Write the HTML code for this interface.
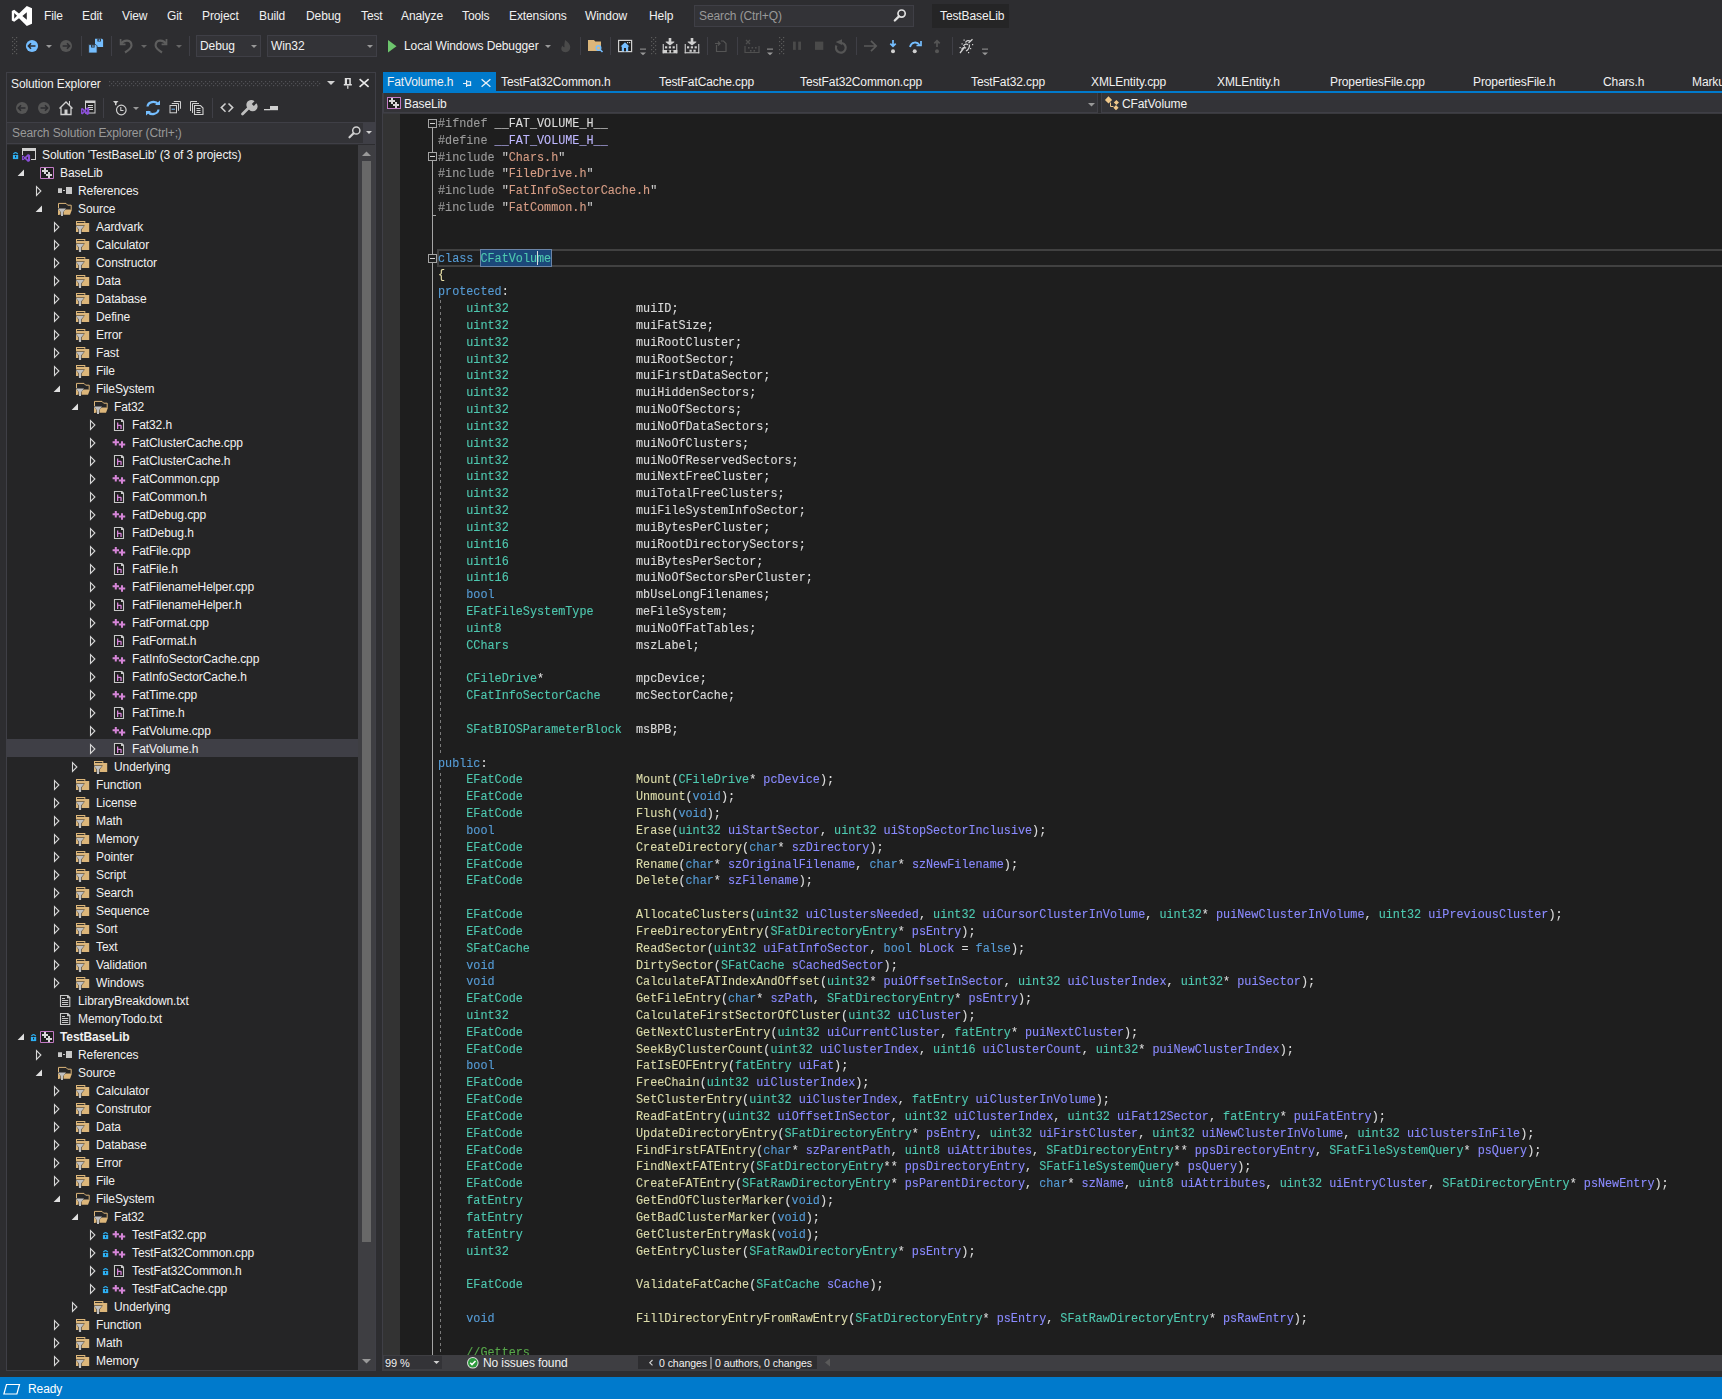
<!DOCTYPE html><html><head><meta charset="utf-8"><style>
*{margin:0;padding:0;box-sizing:border-box}
html,body{width:1722px;height:1399px;overflow:hidden;background:#2D2D30}
body{position:relative;font-family:"Liberation Sans",sans-serif;font-size:12px;color:#F1F1F1}
.a{position:absolute}
.t{position:absolute;white-space:pre;line-height:14px;margin-top:-7px;letter-spacing:-0.1px}
.code{position:absolute;left:0;top:0;font-family:"Liberation Mono",monospace;font-size:12.5px;white-space:pre;color:#DCDCDC;-webkit-text-stroke:0.12px currentColor}
.ln{position:absolute;left:0;height:17px;line-height:17px;transform-origin:0 0}
.k{color:#569CD6}.ty{color:#4EC9B0}.s{color:#D69D85}.p{color:#9B9B9B}.m{color:#BEB7FF}.f{color:#DCDCAA}.pr{color:#8A8AFF}.c{color:#57A64A}.br{color:#E8DFA8}.q{color:#C8C8C8}.w{color:#DCDCDC}
</style></head><body><div class="a" style="left:0;top:0;width:1722px;height:1399px;background:#2D2D30"></div><div class="t " style="left:44px;top:16px;">File</div><div class="t " style="left:82px;top:16px;">Edit</div><div class="t " style="left:122px;top:16px;">View</div><div class="t " style="left:167px;top:16px;">Git</div><div class="t " style="left:202px;top:16px;">Project</div><div class="t " style="left:259px;top:16px;">Build</div><div class="t " style="left:306px;top:16px;">Debug</div><div class="t " style="left:361px;top:16px;">Test</div><div class="t " style="left:401px;top:16px;">Analyze</div><div class="t " style="left:462px;top:16px;">Tools</div><div class="t " style="left:509px;top:16px;">Extensions</div><div class="t " style="left:585px;top:16px;">Window</div><div class="t " style="left:649px;top:16px;">Help</div><div class="a" style="left:694px;top:5px;width:220px;height:22px;background:#333337;border:1px solid #3F3F46"></div><div class="t " style="left:699px;top:16px;color:#999999">Search (Ctrl+Q)</div><div class="a" style="left:932px;top:4px;width:77px;height:24px;background:#252526"></div><div class="t " style="left:940px;top:16px;">TestBaseLib</div><div class="a" style="left:196px;top:35px;width:65px;height:22px;background:#333337;border:1px solid #3F3F46"></div><div class="t " style="left:200px;top:46px;">Debug</div><div class="a" style="left:267px;top:35px;width:110px;height:22px;background:#333337;border:1px solid #3F3F46"></div><div class="t " style="left:271px;top:46px;">Win32</div><div class="t " style="left:404px;top:46px;">Local Windows Debugger</div><div class="a" style="left:6px;top:72px;width:370px;height:1299px;border:1px solid #3F3F46;background:#2D2D30"></div><div class="t " style="left:11px;top:84px;">Solution Explorer</div><div class="a" style="left:7px;top:122px;width:368px;height:22px;background:#333337;border-top:1px solid #3F3F46;border-bottom:1px solid #3F3F46"></div><div class="a" style="left:363px;top:122px;width:12px;height:22px;background:#3F3F46"></div><div class="t " style="left:12px;top:133px;color:#999999">Search Solution Explorer (Ctrl+;)</div><div class="a" style="left:7px;top:145px;width:351px;height:1225px;background:#252526"></div><div class="a" style="left:358px;top:145px;width:17px;height:1225px;background:#3E3E42"></div><div class="a" style="left:362px;top:161px;width:9px;height:1081px;background:#686868"></div><div class="a" style="left:7px;top:739px;width:351px;height:18px;background:#3F3F46"></div><div class="t " style="left:42px;top:155px;">Solution &#x27;TestBaseLib&#x27; (3 of 3 projects)</div><svg class="a" style="left:21px;top:147px" width="16" height="16" viewBox="0 0 16 16" overflow="visible"><path d="M1 1h14v3H1z" fill="#D0D0D0"/><path d="M1 1h1v7H1zM14 1h1v12h-1zM10 12h5v1h-5z" fill="#D0D0D0"/><g transform="translate(1,7) scale(0.4) translate(-11.8,-5.9)"><path fill-rule="evenodd" d="M11.8 11L14.2 9.8L19 13.4L26.8 5.9L32 8.2V23.7L26.8 26L19 18.2L14.2 21.8L11.8 20.6zM26.8 12.2L22.4 15.9L26.8 19.7zM14.2 12.9V18.7L17 15.8z" fill="#8A4FD8"/></g></svg><svg class="a" style="left:12px;top:151px" width="7" height="9" viewBox="0 0 7 9" overflow="visible"><path d="M1.4 3.2Q3.55 0.2 5.7 3.2" fill="none" stroke="#2DB1F5" stroke-width="1.3"/><path d="M0.9 4h5.3v4.1H0.9z" fill="#2DB1F5"/><path d="M3 4.7h1.1v1.8H3z" fill="#1E1E1E"/></svg><div class="t " style="left:60px;top:173px;">BaseLib</div><svg class="a" style="left:17px;top:169px" width="8" height="8" viewBox="0 0 8 8" overflow="visible"><path d="M7 0.6V7H0.6z" fill="#E0E0E0"/></svg><svg class="a" style="left:40px;top:167px" width="16" height="16" viewBox="0 0 16 16" overflow="visible"><path d="M0.5 0.5H13.5V11.5H0.5z" fill="#1E1E1E" stroke="#C27BC4" stroke-width="1"/><path d="M4 1h2v2h2v2H6v2H4V5H2V3h2z" fill="#D8D8D8"/><path d="M8 5h2v2h2v2h-2v2H8V9H6V7h2z" fill="#D8D8D8"/></svg><div class="t " style="left:78px;top:191px;">References</div><svg class="a" style="left:34.5px;top:184.5px" width="8" height="12" viewBox="0 0 8 12" overflow="visible"><path d="M1.5 1.6L5.9 6L1.5 10.4z" fill="none" stroke="#D8D8D8" stroke-width="1.1"/></svg><svg class="a" style="left:58px;top:185px" width="16" height="16" viewBox="0 0 16 16" overflow="visible"><path d="M0 3.2h4v4.8H0zM5 5h2v1H5zM8 2h6v7H8z" fill="#C8C8C8"/></svg><div class="t " style="left:78px;top:209px;">Source</div><svg class="a" style="left:35px;top:205px" width="8" height="8" viewBox="0 0 8 8" overflow="visible"><path d="M7 0.6V7H0.6z" fill="#E0E0E0"/></svg><svg class="a" style="left:58px;top:199px" width="16" height="18" viewBox="0 0 16 18" overflow="visible"><path d="M0.5 16V4.4H8L9.7 6.2H13.2V10.5" fill="none" stroke="#DCB67A" stroke-width="1"/><path d="M0 10.4H14L12 15.7H0z" fill="#DCB67A"/><path d="M-0.5 9h9.1L5.5 12.8V17.6H2.5V12.8z" fill="#252526"/><path d="M0 9.5h8L5 13.3V17H3V13.3z" fill="#C0C0C0"/></svg><div class="t " style="left:96px;top:227px;">Aardvark</div><svg class="a" style="left:52.5px;top:220.5px" width="8" height="12" viewBox="0 0 8 12" overflow="visible"><path d="M1.5 1.6L5.9 6L1.5 10.4z" fill="none" stroke="#D8D8D8" stroke-width="1.1"/></svg><svg class="a" style="left:76px;top:218px" width="16" height="16" viewBox="0 0 16 16" overflow="visible"><path d="M0 3h9.3v2H13.2v9.1H0z" fill="#DCB67A"/><path d="M1 4.1h7.4v0.9H1z" fill="#252526"/><path d="M-0.4 7.4h9.2L5.6 11.4V16.3H2.4V11.4z" fill="#252526"/><path d="M0 7.9h8.1L5.1 11.6V16H2.9V11.6z" fill="#C0C0C0"/></svg><div class="t " style="left:96px;top:245px;">Calculator</div><svg class="a" style="left:52.5px;top:238.5px" width="8" height="12" viewBox="0 0 8 12" overflow="visible"><path d="M1.5 1.6L5.9 6L1.5 10.4z" fill="none" stroke="#D8D8D8" stroke-width="1.1"/></svg><svg class="a" style="left:76px;top:236px" width="16" height="16" viewBox="0 0 16 16" overflow="visible"><path d="M0 3h9.3v2H13.2v9.1H0z" fill="#DCB67A"/><path d="M1 4.1h7.4v0.9H1z" fill="#252526"/><path d="M-0.4 7.4h9.2L5.6 11.4V16.3H2.4V11.4z" fill="#252526"/><path d="M0 7.9h8.1L5.1 11.6V16H2.9V11.6z" fill="#C0C0C0"/></svg><div class="t " style="left:96px;top:263px;">Constructor</div><svg class="a" style="left:52.5px;top:256.5px" width="8" height="12" viewBox="0 0 8 12" overflow="visible"><path d="M1.5 1.6L5.9 6L1.5 10.4z" fill="none" stroke="#D8D8D8" stroke-width="1.1"/></svg><svg class="a" style="left:76px;top:254px" width="16" height="16" viewBox="0 0 16 16" overflow="visible"><path d="M0 3h9.3v2H13.2v9.1H0z" fill="#DCB67A"/><path d="M1 4.1h7.4v0.9H1z" fill="#252526"/><path d="M-0.4 7.4h9.2L5.6 11.4V16.3H2.4V11.4z" fill="#252526"/><path d="M0 7.9h8.1L5.1 11.6V16H2.9V11.6z" fill="#C0C0C0"/></svg><div class="t " style="left:96px;top:281px;">Data</div><svg class="a" style="left:52.5px;top:274.5px" width="8" height="12" viewBox="0 0 8 12" overflow="visible"><path d="M1.5 1.6L5.9 6L1.5 10.4z" fill="none" stroke="#D8D8D8" stroke-width="1.1"/></svg><svg class="a" style="left:76px;top:272px" width="16" height="16" viewBox="0 0 16 16" overflow="visible"><path d="M0 3h9.3v2H13.2v9.1H0z" fill="#DCB67A"/><path d="M1 4.1h7.4v0.9H1z" fill="#252526"/><path d="M-0.4 7.4h9.2L5.6 11.4V16.3H2.4V11.4z" fill="#252526"/><path d="M0 7.9h8.1L5.1 11.6V16H2.9V11.6z" fill="#C0C0C0"/></svg><div class="t " style="left:96px;top:299px;">Database</div><svg class="a" style="left:52.5px;top:292.5px" width="8" height="12" viewBox="0 0 8 12" overflow="visible"><path d="M1.5 1.6L5.9 6L1.5 10.4z" fill="none" stroke="#D8D8D8" stroke-width="1.1"/></svg><svg class="a" style="left:76px;top:290px" width="16" height="16" viewBox="0 0 16 16" overflow="visible"><path d="M0 3h9.3v2H13.2v9.1H0z" fill="#DCB67A"/><path d="M1 4.1h7.4v0.9H1z" fill="#252526"/><path d="M-0.4 7.4h9.2L5.6 11.4V16.3H2.4V11.4z" fill="#252526"/><path d="M0 7.9h8.1L5.1 11.6V16H2.9V11.6z" fill="#C0C0C0"/></svg><div class="t " style="left:96px;top:317px;">Define</div><svg class="a" style="left:52.5px;top:310.5px" width="8" height="12" viewBox="0 0 8 12" overflow="visible"><path d="M1.5 1.6L5.9 6L1.5 10.4z" fill="none" stroke="#D8D8D8" stroke-width="1.1"/></svg><svg class="a" style="left:76px;top:308px" width="16" height="16" viewBox="0 0 16 16" overflow="visible"><path d="M0 3h9.3v2H13.2v9.1H0z" fill="#DCB67A"/><path d="M1 4.1h7.4v0.9H1z" fill="#252526"/><path d="M-0.4 7.4h9.2L5.6 11.4V16.3H2.4V11.4z" fill="#252526"/><path d="M0 7.9h8.1L5.1 11.6V16H2.9V11.6z" fill="#C0C0C0"/></svg><div class="t " style="left:96px;top:335px;">Error</div><svg class="a" style="left:52.5px;top:328.5px" width="8" height="12" viewBox="0 0 8 12" overflow="visible"><path d="M1.5 1.6L5.9 6L1.5 10.4z" fill="none" stroke="#D8D8D8" stroke-width="1.1"/></svg><svg class="a" style="left:76px;top:326px" width="16" height="16" viewBox="0 0 16 16" overflow="visible"><path d="M0 3h9.3v2H13.2v9.1H0z" fill="#DCB67A"/><path d="M1 4.1h7.4v0.9H1z" fill="#252526"/><path d="M-0.4 7.4h9.2L5.6 11.4V16.3H2.4V11.4z" fill="#252526"/><path d="M0 7.9h8.1L5.1 11.6V16H2.9V11.6z" fill="#C0C0C0"/></svg><div class="t " style="left:96px;top:353px;">Fast</div><svg class="a" style="left:52.5px;top:346.5px" width="8" height="12" viewBox="0 0 8 12" overflow="visible"><path d="M1.5 1.6L5.9 6L1.5 10.4z" fill="none" stroke="#D8D8D8" stroke-width="1.1"/></svg><svg class="a" style="left:76px;top:344px" width="16" height="16" viewBox="0 0 16 16" overflow="visible"><path d="M0 3h9.3v2H13.2v9.1H0z" fill="#DCB67A"/><path d="M1 4.1h7.4v0.9H1z" fill="#252526"/><path d="M-0.4 7.4h9.2L5.6 11.4V16.3H2.4V11.4z" fill="#252526"/><path d="M0 7.9h8.1L5.1 11.6V16H2.9V11.6z" fill="#C0C0C0"/></svg><div class="t " style="left:96px;top:371px;">File</div><svg class="a" style="left:52.5px;top:364.5px" width="8" height="12" viewBox="0 0 8 12" overflow="visible"><path d="M1.5 1.6L5.9 6L1.5 10.4z" fill="none" stroke="#D8D8D8" stroke-width="1.1"/></svg><svg class="a" style="left:76px;top:362px" width="16" height="16" viewBox="0 0 16 16" overflow="visible"><path d="M0 3h9.3v2H13.2v9.1H0z" fill="#DCB67A"/><path d="M1 4.1h7.4v0.9H1z" fill="#252526"/><path d="M-0.4 7.4h9.2L5.6 11.4V16.3H2.4V11.4z" fill="#252526"/><path d="M0 7.9h8.1L5.1 11.6V16H2.9V11.6z" fill="#C0C0C0"/></svg><div class="t " style="left:96px;top:389px;">FileSystem</div><svg class="a" style="left:53px;top:385px" width="8" height="8" viewBox="0 0 8 8" overflow="visible"><path d="M7 0.6V7H0.6z" fill="#E0E0E0"/></svg><svg class="a" style="left:76px;top:379px" width="16" height="18" viewBox="0 0 16 18" overflow="visible"><path d="M0.5 16V4.4H8L9.7 6.2H13.2V10.5" fill="none" stroke="#DCB67A" stroke-width="1"/><path d="M0 10.4H14L12 15.7H0z" fill="#DCB67A"/><path d="M-0.5 9h9.1L5.5 12.8V17.6H2.5V12.8z" fill="#252526"/><path d="M0 9.5h8L5 13.3V17H3V13.3z" fill="#C0C0C0"/></svg><div class="t " style="left:114px;top:407px;">Fat32</div><svg class="a" style="left:71px;top:403px" width="8" height="8" viewBox="0 0 8 8" overflow="visible"><path d="M7 0.6V7H0.6z" fill="#E0E0E0"/></svg><svg class="a" style="left:94px;top:397px" width="16" height="18" viewBox="0 0 16 18" overflow="visible"><path d="M0.5 16V4.4H8L9.7 6.2H13.2V10.5" fill="none" stroke="#DCB67A" stroke-width="1"/><path d="M0 10.4H14L12 15.7H0z" fill="#DCB67A"/><path d="M-0.5 9h9.1L5.5 12.8V17.6H2.5V12.8z" fill="#252526"/><path d="M0 9.5h8L5 13.3V17H3V13.3z" fill="#C0C0C0"/></svg><div class="t " style="left:132px;top:425px;">Fat32.h</div><svg class="a" style="left:88.5px;top:418.5px" width="8" height="12" viewBox="0 0 8 12" overflow="visible"><path d="M1.5 1.6L5.9 6L1.5 10.4z" fill="none" stroke="#D8D8D8" stroke-width="1.1"/></svg><svg class="a" style="left:113px;top:418px" width="16" height="16" viewBox="0 0 16 16" overflow="visible"><path d="M1.5 1.5H8.5L10.5 3.5V12.5H1.5z" fill="#1E1E1E" stroke="#C8C8C8" stroke-width="1.1"/><path d="M8 1H9L11 3V4H8z" fill="#C8C8C8"/><path d="M4 4.5h1.3v2.2h2.4q1 0 1 1V11H7.4V8H5.3V11H4z" fill="#D685D8"/></svg><div class="t " style="left:132px;top:443px;">FatClusterCache.cpp</div><svg class="a" style="left:88.5px;top:436.5px" width="8" height="12" viewBox="0 0 8 12" overflow="visible"><path d="M1.5 1.6L5.9 6L1.5 10.4z" fill="none" stroke="#D8D8D8" stroke-width="1.1"/></svg><svg class="a" style="left:111px;top:436px" width="16" height="16" viewBox="0 0 16 16" overflow="visible"><path d="M1.6 5.3h2.2v-2.2h2v2.2h2.2v2h-2.2v2.2h-2v-2.2H1.6z" fill="#D685D8"/><path d="M7.8 7.5h2.2v-2.2h2v2.2h2.2v2h-2.2v2.2h-2v-2.2H7.8z" fill="#D685D8"/></svg><div class="t " style="left:132px;top:461px;">FatClusterCache.h</div><svg class="a" style="left:88.5px;top:454.5px" width="8" height="12" viewBox="0 0 8 12" overflow="visible"><path d="M1.5 1.6L5.9 6L1.5 10.4z" fill="none" stroke="#D8D8D8" stroke-width="1.1"/></svg><svg class="a" style="left:113px;top:454px" width="16" height="16" viewBox="0 0 16 16" overflow="visible"><path d="M1.5 1.5H8.5L10.5 3.5V12.5H1.5z" fill="#1E1E1E" stroke="#C8C8C8" stroke-width="1.1"/><path d="M8 1H9L11 3V4H8z" fill="#C8C8C8"/><path d="M4 4.5h1.3v2.2h2.4q1 0 1 1V11H7.4V8H5.3V11H4z" fill="#D685D8"/></svg><div class="t " style="left:132px;top:479px;">FatCommon.cpp</div><svg class="a" style="left:88.5px;top:472.5px" width="8" height="12" viewBox="0 0 8 12" overflow="visible"><path d="M1.5 1.6L5.9 6L1.5 10.4z" fill="none" stroke="#D8D8D8" stroke-width="1.1"/></svg><svg class="a" style="left:111px;top:472px" width="16" height="16" viewBox="0 0 16 16" overflow="visible"><path d="M1.6 5.3h2.2v-2.2h2v2.2h2.2v2h-2.2v2.2h-2v-2.2H1.6z" fill="#D685D8"/><path d="M7.8 7.5h2.2v-2.2h2v2.2h2.2v2h-2.2v2.2h-2v-2.2H7.8z" fill="#D685D8"/></svg><div class="t " style="left:132px;top:497px;">FatCommon.h</div><svg class="a" style="left:88.5px;top:490.5px" width="8" height="12" viewBox="0 0 8 12" overflow="visible"><path d="M1.5 1.6L5.9 6L1.5 10.4z" fill="none" stroke="#D8D8D8" stroke-width="1.1"/></svg><svg class="a" style="left:113px;top:490px" width="16" height="16" viewBox="0 0 16 16" overflow="visible"><path d="M1.5 1.5H8.5L10.5 3.5V12.5H1.5z" fill="#1E1E1E" stroke="#C8C8C8" stroke-width="1.1"/><path d="M8 1H9L11 3V4H8z" fill="#C8C8C8"/><path d="M4 4.5h1.3v2.2h2.4q1 0 1 1V11H7.4V8H5.3V11H4z" fill="#D685D8"/></svg><div class="t " style="left:132px;top:515px;">FatDebug.cpp</div><svg class="a" style="left:88.5px;top:508.5px" width="8" height="12" viewBox="0 0 8 12" overflow="visible"><path d="M1.5 1.6L5.9 6L1.5 10.4z" fill="none" stroke="#D8D8D8" stroke-width="1.1"/></svg><svg class="a" style="left:111px;top:508px" width="16" height="16" viewBox="0 0 16 16" overflow="visible"><path d="M1.6 5.3h2.2v-2.2h2v2.2h2.2v2h-2.2v2.2h-2v-2.2H1.6z" fill="#D685D8"/><path d="M7.8 7.5h2.2v-2.2h2v2.2h2.2v2h-2.2v2.2h-2v-2.2H7.8z" fill="#D685D8"/></svg><div class="t " style="left:132px;top:533px;">FatDebug.h</div><svg class="a" style="left:88.5px;top:526.5px" width="8" height="12" viewBox="0 0 8 12" overflow="visible"><path d="M1.5 1.6L5.9 6L1.5 10.4z" fill="none" stroke="#D8D8D8" stroke-width="1.1"/></svg><svg class="a" style="left:113px;top:526px" width="16" height="16" viewBox="0 0 16 16" overflow="visible"><path d="M1.5 1.5H8.5L10.5 3.5V12.5H1.5z" fill="#1E1E1E" stroke="#C8C8C8" stroke-width="1.1"/><path d="M8 1H9L11 3V4H8z" fill="#C8C8C8"/><path d="M4 4.5h1.3v2.2h2.4q1 0 1 1V11H7.4V8H5.3V11H4z" fill="#D685D8"/></svg><div class="t " style="left:132px;top:551px;">FatFile.cpp</div><svg class="a" style="left:88.5px;top:544.5px" width="8" height="12" viewBox="0 0 8 12" overflow="visible"><path d="M1.5 1.6L5.9 6L1.5 10.4z" fill="none" stroke="#D8D8D8" stroke-width="1.1"/></svg><svg class="a" style="left:111px;top:544px" width="16" height="16" viewBox="0 0 16 16" overflow="visible"><path d="M1.6 5.3h2.2v-2.2h2v2.2h2.2v2h-2.2v2.2h-2v-2.2H1.6z" fill="#D685D8"/><path d="M7.8 7.5h2.2v-2.2h2v2.2h2.2v2h-2.2v2.2h-2v-2.2H7.8z" fill="#D685D8"/></svg><div class="t " style="left:132px;top:569px;">FatFile.h</div><svg class="a" style="left:88.5px;top:562.5px" width="8" height="12" viewBox="0 0 8 12" overflow="visible"><path d="M1.5 1.6L5.9 6L1.5 10.4z" fill="none" stroke="#D8D8D8" stroke-width="1.1"/></svg><svg class="a" style="left:113px;top:562px" width="16" height="16" viewBox="0 0 16 16" overflow="visible"><path d="M1.5 1.5H8.5L10.5 3.5V12.5H1.5z" fill="#1E1E1E" stroke="#C8C8C8" stroke-width="1.1"/><path d="M8 1H9L11 3V4H8z" fill="#C8C8C8"/><path d="M4 4.5h1.3v2.2h2.4q1 0 1 1V11H7.4V8H5.3V11H4z" fill="#D685D8"/></svg><div class="t " style="left:132px;top:587px;">FatFilenameHelper.cpp</div><svg class="a" style="left:88.5px;top:580.5px" width="8" height="12" viewBox="0 0 8 12" overflow="visible"><path d="M1.5 1.6L5.9 6L1.5 10.4z" fill="none" stroke="#D8D8D8" stroke-width="1.1"/></svg><svg class="a" style="left:111px;top:580px" width="16" height="16" viewBox="0 0 16 16" overflow="visible"><path d="M1.6 5.3h2.2v-2.2h2v2.2h2.2v2h-2.2v2.2h-2v-2.2H1.6z" fill="#D685D8"/><path d="M7.8 7.5h2.2v-2.2h2v2.2h2.2v2h-2.2v2.2h-2v-2.2H7.8z" fill="#D685D8"/></svg><div class="t " style="left:132px;top:605px;">FatFilenameHelper.h</div><svg class="a" style="left:88.5px;top:598.5px" width="8" height="12" viewBox="0 0 8 12" overflow="visible"><path d="M1.5 1.6L5.9 6L1.5 10.4z" fill="none" stroke="#D8D8D8" stroke-width="1.1"/></svg><svg class="a" style="left:113px;top:598px" width="16" height="16" viewBox="0 0 16 16" overflow="visible"><path d="M1.5 1.5H8.5L10.5 3.5V12.5H1.5z" fill="#1E1E1E" stroke="#C8C8C8" stroke-width="1.1"/><path d="M8 1H9L11 3V4H8z" fill="#C8C8C8"/><path d="M4 4.5h1.3v2.2h2.4q1 0 1 1V11H7.4V8H5.3V11H4z" fill="#D685D8"/></svg><div class="t " style="left:132px;top:623px;">FatFormat.cpp</div><svg class="a" style="left:88.5px;top:616.5px" width="8" height="12" viewBox="0 0 8 12" overflow="visible"><path d="M1.5 1.6L5.9 6L1.5 10.4z" fill="none" stroke="#D8D8D8" stroke-width="1.1"/></svg><svg class="a" style="left:111px;top:616px" width="16" height="16" viewBox="0 0 16 16" overflow="visible"><path d="M1.6 5.3h2.2v-2.2h2v2.2h2.2v2h-2.2v2.2h-2v-2.2H1.6z" fill="#D685D8"/><path d="M7.8 7.5h2.2v-2.2h2v2.2h2.2v2h-2.2v2.2h-2v-2.2H7.8z" fill="#D685D8"/></svg><div class="t " style="left:132px;top:641px;">FatFormat.h</div><svg class="a" style="left:88.5px;top:634.5px" width="8" height="12" viewBox="0 0 8 12" overflow="visible"><path d="M1.5 1.6L5.9 6L1.5 10.4z" fill="none" stroke="#D8D8D8" stroke-width="1.1"/></svg><svg class="a" style="left:113px;top:634px" width="16" height="16" viewBox="0 0 16 16" overflow="visible"><path d="M1.5 1.5H8.5L10.5 3.5V12.5H1.5z" fill="#1E1E1E" stroke="#C8C8C8" stroke-width="1.1"/><path d="M8 1H9L11 3V4H8z" fill="#C8C8C8"/><path d="M4 4.5h1.3v2.2h2.4q1 0 1 1V11H7.4V8H5.3V11H4z" fill="#D685D8"/></svg><div class="t " style="left:132px;top:659px;">FatInfoSectorCache.cpp</div><svg class="a" style="left:88.5px;top:652.5px" width="8" height="12" viewBox="0 0 8 12" overflow="visible"><path d="M1.5 1.6L5.9 6L1.5 10.4z" fill="none" stroke="#D8D8D8" stroke-width="1.1"/></svg><svg class="a" style="left:111px;top:652px" width="16" height="16" viewBox="0 0 16 16" overflow="visible"><path d="M1.6 5.3h2.2v-2.2h2v2.2h2.2v2h-2.2v2.2h-2v-2.2H1.6z" fill="#D685D8"/><path d="M7.8 7.5h2.2v-2.2h2v2.2h2.2v2h-2.2v2.2h-2v-2.2H7.8z" fill="#D685D8"/></svg><div class="t " style="left:132px;top:677px;">FatInfoSectorCache.h</div><svg class="a" style="left:88.5px;top:670.5px" width="8" height="12" viewBox="0 0 8 12" overflow="visible"><path d="M1.5 1.6L5.9 6L1.5 10.4z" fill="none" stroke="#D8D8D8" stroke-width="1.1"/></svg><svg class="a" style="left:113px;top:670px" width="16" height="16" viewBox="0 0 16 16" overflow="visible"><path d="M1.5 1.5H8.5L10.5 3.5V12.5H1.5z" fill="#1E1E1E" stroke="#C8C8C8" stroke-width="1.1"/><path d="M8 1H9L11 3V4H8z" fill="#C8C8C8"/><path d="M4 4.5h1.3v2.2h2.4q1 0 1 1V11H7.4V8H5.3V11H4z" fill="#D685D8"/></svg><div class="t " style="left:132px;top:695px;">FatTime.cpp</div><svg class="a" style="left:88.5px;top:688.5px" width="8" height="12" viewBox="0 0 8 12" overflow="visible"><path d="M1.5 1.6L5.9 6L1.5 10.4z" fill="none" stroke="#D8D8D8" stroke-width="1.1"/></svg><svg class="a" style="left:111px;top:688px" width="16" height="16" viewBox="0 0 16 16" overflow="visible"><path d="M1.6 5.3h2.2v-2.2h2v2.2h2.2v2h-2.2v2.2h-2v-2.2H1.6z" fill="#D685D8"/><path d="M7.8 7.5h2.2v-2.2h2v2.2h2.2v2h-2.2v2.2h-2v-2.2H7.8z" fill="#D685D8"/></svg><div class="t " style="left:132px;top:713px;">FatTime.h</div><svg class="a" style="left:88.5px;top:706.5px" width="8" height="12" viewBox="0 0 8 12" overflow="visible"><path d="M1.5 1.6L5.9 6L1.5 10.4z" fill="none" stroke="#D8D8D8" stroke-width="1.1"/></svg><svg class="a" style="left:113px;top:706px" width="16" height="16" viewBox="0 0 16 16" overflow="visible"><path d="M1.5 1.5H8.5L10.5 3.5V12.5H1.5z" fill="#1E1E1E" stroke="#C8C8C8" stroke-width="1.1"/><path d="M8 1H9L11 3V4H8z" fill="#C8C8C8"/><path d="M4 4.5h1.3v2.2h2.4q1 0 1 1V11H7.4V8H5.3V11H4z" fill="#D685D8"/></svg><div class="t " style="left:132px;top:731px;">FatVolume.cpp</div><svg class="a" style="left:88.5px;top:724.5px" width="8" height="12" viewBox="0 0 8 12" overflow="visible"><path d="M1.5 1.6L5.9 6L1.5 10.4z" fill="none" stroke="#D8D8D8" stroke-width="1.1"/></svg><svg class="a" style="left:111px;top:724px" width="16" height="16" viewBox="0 0 16 16" overflow="visible"><path d="M1.6 5.3h2.2v-2.2h2v2.2h2.2v2h-2.2v2.2h-2v-2.2H1.6z" fill="#D685D8"/><path d="M7.8 7.5h2.2v-2.2h2v2.2h2.2v2h-2.2v2.2h-2v-2.2H7.8z" fill="#D685D8"/></svg><div class="t " style="left:132px;top:749px;">FatVolume.h</div><svg class="a" style="left:88.5px;top:742.5px" width="8" height="12" viewBox="0 0 8 12" overflow="visible"><path d="M1.5 1.6L5.9 6L1.5 10.4z" fill="none" stroke="#D8D8D8" stroke-width="1.1"/></svg><svg class="a" style="left:113px;top:742px" width="16" height="16" viewBox="0 0 16 16" overflow="visible"><path d="M1.5 1.5H8.5L10.5 3.5V12.5H1.5z" fill="#1E1E1E" stroke="#C8C8C8" stroke-width="1.1"/><path d="M8 1H9L11 3V4H8z" fill="#C8C8C8"/><path d="M4 4.5h1.3v2.2h2.4q1 0 1 1V11H7.4V8H5.3V11H4z" fill="#D685D8"/></svg><div class="t " style="left:114px;top:767px;">Underlying</div><svg class="a" style="left:70.5px;top:760.5px" width="8" height="12" viewBox="0 0 8 12" overflow="visible"><path d="M1.5 1.6L5.9 6L1.5 10.4z" fill="none" stroke="#D8D8D8" stroke-width="1.1"/></svg><svg class="a" style="left:94px;top:758px" width="16" height="16" viewBox="0 0 16 16" overflow="visible"><path d="M0 3h9.3v2H13.2v9.1H0z" fill="#DCB67A"/><path d="M1 4.1h7.4v0.9H1z" fill="#252526"/><path d="M-0.4 7.4h9.2L5.6 11.4V16.3H2.4V11.4z" fill="#252526"/><path d="M0 7.9h8.1L5.1 11.6V16H2.9V11.6z" fill="#C0C0C0"/></svg><div class="t " style="left:96px;top:785px;">Function</div><svg class="a" style="left:52.5px;top:778.5px" width="8" height="12" viewBox="0 0 8 12" overflow="visible"><path d="M1.5 1.6L5.9 6L1.5 10.4z" fill="none" stroke="#D8D8D8" stroke-width="1.1"/></svg><svg class="a" style="left:76px;top:776px" width="16" height="16" viewBox="0 0 16 16" overflow="visible"><path d="M0 3h9.3v2H13.2v9.1H0z" fill="#DCB67A"/><path d="M1 4.1h7.4v0.9H1z" fill="#252526"/><path d="M-0.4 7.4h9.2L5.6 11.4V16.3H2.4V11.4z" fill="#252526"/><path d="M0 7.9h8.1L5.1 11.6V16H2.9V11.6z" fill="#C0C0C0"/></svg><div class="t " style="left:96px;top:803px;">License</div><svg class="a" style="left:52.5px;top:796.5px" width="8" height="12" viewBox="0 0 8 12" overflow="visible"><path d="M1.5 1.6L5.9 6L1.5 10.4z" fill="none" stroke="#D8D8D8" stroke-width="1.1"/></svg><svg class="a" style="left:76px;top:794px" width="16" height="16" viewBox="0 0 16 16" overflow="visible"><path d="M0 3h9.3v2H13.2v9.1H0z" fill="#DCB67A"/><path d="M1 4.1h7.4v0.9H1z" fill="#252526"/><path d="M-0.4 7.4h9.2L5.6 11.4V16.3H2.4V11.4z" fill="#252526"/><path d="M0 7.9h8.1L5.1 11.6V16H2.9V11.6z" fill="#C0C0C0"/></svg><div class="t " style="left:96px;top:821px;">Math</div><svg class="a" style="left:52.5px;top:814.5px" width="8" height="12" viewBox="0 0 8 12" overflow="visible"><path d="M1.5 1.6L5.9 6L1.5 10.4z" fill="none" stroke="#D8D8D8" stroke-width="1.1"/></svg><svg class="a" style="left:76px;top:812px" width="16" height="16" viewBox="0 0 16 16" overflow="visible"><path d="M0 3h9.3v2H13.2v9.1H0z" fill="#DCB67A"/><path d="M1 4.1h7.4v0.9H1z" fill="#252526"/><path d="M-0.4 7.4h9.2L5.6 11.4V16.3H2.4V11.4z" fill="#252526"/><path d="M0 7.9h8.1L5.1 11.6V16H2.9V11.6z" fill="#C0C0C0"/></svg><div class="t " style="left:96px;top:839px;">Memory</div><svg class="a" style="left:52.5px;top:832.5px" width="8" height="12" viewBox="0 0 8 12" overflow="visible"><path d="M1.5 1.6L5.9 6L1.5 10.4z" fill="none" stroke="#D8D8D8" stroke-width="1.1"/></svg><svg class="a" style="left:76px;top:830px" width="16" height="16" viewBox="0 0 16 16" overflow="visible"><path d="M0 3h9.3v2H13.2v9.1H0z" fill="#DCB67A"/><path d="M1 4.1h7.4v0.9H1z" fill="#252526"/><path d="M-0.4 7.4h9.2L5.6 11.4V16.3H2.4V11.4z" fill="#252526"/><path d="M0 7.9h8.1L5.1 11.6V16H2.9V11.6z" fill="#C0C0C0"/></svg><div class="t " style="left:96px;top:857px;">Pointer</div><svg class="a" style="left:52.5px;top:850.5px" width="8" height="12" viewBox="0 0 8 12" overflow="visible"><path d="M1.5 1.6L5.9 6L1.5 10.4z" fill="none" stroke="#D8D8D8" stroke-width="1.1"/></svg><svg class="a" style="left:76px;top:848px" width="16" height="16" viewBox="0 0 16 16" overflow="visible"><path d="M0 3h9.3v2H13.2v9.1H0z" fill="#DCB67A"/><path d="M1 4.1h7.4v0.9H1z" fill="#252526"/><path d="M-0.4 7.4h9.2L5.6 11.4V16.3H2.4V11.4z" fill="#252526"/><path d="M0 7.9h8.1L5.1 11.6V16H2.9V11.6z" fill="#C0C0C0"/></svg><div class="t " style="left:96px;top:875px;">Script</div><svg class="a" style="left:52.5px;top:868.5px" width="8" height="12" viewBox="0 0 8 12" overflow="visible"><path d="M1.5 1.6L5.9 6L1.5 10.4z" fill="none" stroke="#D8D8D8" stroke-width="1.1"/></svg><svg class="a" style="left:76px;top:866px" width="16" height="16" viewBox="0 0 16 16" overflow="visible"><path d="M0 3h9.3v2H13.2v9.1H0z" fill="#DCB67A"/><path d="M1 4.1h7.4v0.9H1z" fill="#252526"/><path d="M-0.4 7.4h9.2L5.6 11.4V16.3H2.4V11.4z" fill="#252526"/><path d="M0 7.9h8.1L5.1 11.6V16H2.9V11.6z" fill="#C0C0C0"/></svg><div class="t " style="left:96px;top:893px;">Search</div><svg class="a" style="left:52.5px;top:886.5px" width="8" height="12" viewBox="0 0 8 12" overflow="visible"><path d="M1.5 1.6L5.9 6L1.5 10.4z" fill="none" stroke="#D8D8D8" stroke-width="1.1"/></svg><svg class="a" style="left:76px;top:884px" width="16" height="16" viewBox="0 0 16 16" overflow="visible"><path d="M0 3h9.3v2H13.2v9.1H0z" fill="#DCB67A"/><path d="M1 4.1h7.4v0.9H1z" fill="#252526"/><path d="M-0.4 7.4h9.2L5.6 11.4V16.3H2.4V11.4z" fill="#252526"/><path d="M0 7.9h8.1L5.1 11.6V16H2.9V11.6z" fill="#C0C0C0"/></svg><div class="t " style="left:96px;top:911px;">Sequence</div><svg class="a" style="left:52.5px;top:904.5px" width="8" height="12" viewBox="0 0 8 12" overflow="visible"><path d="M1.5 1.6L5.9 6L1.5 10.4z" fill="none" stroke="#D8D8D8" stroke-width="1.1"/></svg><svg class="a" style="left:76px;top:902px" width="16" height="16" viewBox="0 0 16 16" overflow="visible"><path d="M0 3h9.3v2H13.2v9.1H0z" fill="#DCB67A"/><path d="M1 4.1h7.4v0.9H1z" fill="#252526"/><path d="M-0.4 7.4h9.2L5.6 11.4V16.3H2.4V11.4z" fill="#252526"/><path d="M0 7.9h8.1L5.1 11.6V16H2.9V11.6z" fill="#C0C0C0"/></svg><div class="t " style="left:96px;top:929px;">Sort</div><svg class="a" style="left:52.5px;top:922.5px" width="8" height="12" viewBox="0 0 8 12" overflow="visible"><path d="M1.5 1.6L5.9 6L1.5 10.4z" fill="none" stroke="#D8D8D8" stroke-width="1.1"/></svg><svg class="a" style="left:76px;top:920px" width="16" height="16" viewBox="0 0 16 16" overflow="visible"><path d="M0 3h9.3v2H13.2v9.1H0z" fill="#DCB67A"/><path d="M1 4.1h7.4v0.9H1z" fill="#252526"/><path d="M-0.4 7.4h9.2L5.6 11.4V16.3H2.4V11.4z" fill="#252526"/><path d="M0 7.9h8.1L5.1 11.6V16H2.9V11.6z" fill="#C0C0C0"/></svg><div class="t " style="left:96px;top:947px;">Text</div><svg class="a" style="left:52.5px;top:940.5px" width="8" height="12" viewBox="0 0 8 12" overflow="visible"><path d="M1.5 1.6L5.9 6L1.5 10.4z" fill="none" stroke="#D8D8D8" stroke-width="1.1"/></svg><svg class="a" style="left:76px;top:938px" width="16" height="16" viewBox="0 0 16 16" overflow="visible"><path d="M0 3h9.3v2H13.2v9.1H0z" fill="#DCB67A"/><path d="M1 4.1h7.4v0.9H1z" fill="#252526"/><path d="M-0.4 7.4h9.2L5.6 11.4V16.3H2.4V11.4z" fill="#252526"/><path d="M0 7.9h8.1L5.1 11.6V16H2.9V11.6z" fill="#C0C0C0"/></svg><div class="t " style="left:96px;top:965px;">Validation</div><svg class="a" style="left:52.5px;top:958.5px" width="8" height="12" viewBox="0 0 8 12" overflow="visible"><path d="M1.5 1.6L5.9 6L1.5 10.4z" fill="none" stroke="#D8D8D8" stroke-width="1.1"/></svg><svg class="a" style="left:76px;top:956px" width="16" height="16" viewBox="0 0 16 16" overflow="visible"><path d="M0 3h9.3v2H13.2v9.1H0z" fill="#DCB67A"/><path d="M1 4.1h7.4v0.9H1z" fill="#252526"/><path d="M-0.4 7.4h9.2L5.6 11.4V16.3H2.4V11.4z" fill="#252526"/><path d="M0 7.9h8.1L5.1 11.6V16H2.9V11.6z" fill="#C0C0C0"/></svg><div class="t " style="left:96px;top:983px;">Windows</div><svg class="a" style="left:52.5px;top:976.5px" width="8" height="12" viewBox="0 0 8 12" overflow="visible"><path d="M1.5 1.6L5.9 6L1.5 10.4z" fill="none" stroke="#D8D8D8" stroke-width="1.1"/></svg><svg class="a" style="left:76px;top:974px" width="16" height="16" viewBox="0 0 16 16" overflow="visible"><path d="M0 3h9.3v2H13.2v9.1H0z" fill="#DCB67A"/><path d="M1 4.1h7.4v0.9H1z" fill="#252526"/><path d="M-0.4 7.4h9.2L5.6 11.4V16.3H2.4V11.4z" fill="#252526"/><path d="M0 7.9h8.1L5.1 11.6V16H2.9V11.6z" fill="#C0C0C0"/></svg><div class="t " style="left:78px;top:1001px;">LibraryBreakdown.txt</div><svg class="a" style="left:59px;top:994px" width="16" height="16" viewBox="0 0 16 16" overflow="visible"><path d="M1.5 1.5H8.5L10.8 3.8V12.5H1.5z" fill="#252526" stroke="#C8C8C8" stroke-width="1.1"/><path d="M8 1H9L11.3 3.3V4.2H8z" fill="#C8C8C8"/><path d="M3 4h3v1H3zM3 6h6.2v1H3zM3 8h6.2v1H3zM3 10h6.2v1H3z" fill="#C8C8C8"/></svg><div class="t " style="left:78px;top:1019px;">MemoryTodo.txt</div><svg class="a" style="left:59px;top:1012px" width="16" height="16" viewBox="0 0 16 16" overflow="visible"><path d="M1.5 1.5H8.5L10.8 3.8V12.5H1.5z" fill="#252526" stroke="#C8C8C8" stroke-width="1.1"/><path d="M8 1H9L11.3 3.3V4.2H8z" fill="#C8C8C8"/><path d="M3 4h3v1H3zM3 6h6.2v1H3zM3 8h6.2v1H3zM3 10h6.2v1H3z" fill="#C8C8C8"/></svg><div class="t " style="left:60px;top:1037px;font-weight:bold;">TestBaseLib</div><svg class="a" style="left:17px;top:1033px" width="8" height="8" viewBox="0 0 8 8" overflow="visible"><path d="M7 0.6V7H0.6z" fill="#E0E0E0"/></svg><svg class="a" style="left:40px;top:1031px" width="16" height="16" viewBox="0 0 16 16" overflow="visible"><path d="M0.5 0.5H13.5V11.5H0.5z" fill="#1E1E1E" stroke="#C27BC4" stroke-width="1"/><path d="M4 1h2v2h2v2H6v2H4V5H2V3h2z" fill="#D8D8D8"/><path d="M8 5h2v2h2v2h-2v2H8V9H6V7h2z" fill="#D8D8D8"/></svg><svg class="a" style="left:30px;top:1033px" width="7" height="9" viewBox="0 0 7 9" overflow="visible"><path d="M1.4 3.2Q3.55 0.2 5.7 3.2" fill="none" stroke="#2DB1F5" stroke-width="1.3"/><path d="M0.9 4h5.3v4.1H0.9z" fill="#2DB1F5"/><path d="M3 4.7h1.1v1.8H3z" fill="#1E1E1E"/></svg><div class="t " style="left:78px;top:1055px;">References</div><svg class="a" style="left:34.5px;top:1048.5px" width="8" height="12" viewBox="0 0 8 12" overflow="visible"><path d="M1.5 1.6L5.9 6L1.5 10.4z" fill="none" stroke="#D8D8D8" stroke-width="1.1"/></svg><svg class="a" style="left:58px;top:1049px" width="16" height="16" viewBox="0 0 16 16" overflow="visible"><path d="M0 3.2h4v4.8H0zM5 5h2v1H5zM8 2h6v7H8z" fill="#C8C8C8"/></svg><div class="t " style="left:78px;top:1073px;">Source</div><svg class="a" style="left:35px;top:1069px" width="8" height="8" viewBox="0 0 8 8" overflow="visible"><path d="M7 0.6V7H0.6z" fill="#E0E0E0"/></svg><svg class="a" style="left:58px;top:1063px" width="16" height="18" viewBox="0 0 16 18" overflow="visible"><path d="M0.5 16V4.4H8L9.7 6.2H13.2V10.5" fill="none" stroke="#DCB67A" stroke-width="1"/><path d="M0 10.4H14L12 15.7H0z" fill="#DCB67A"/><path d="M-0.5 9h9.1L5.5 12.8V17.6H2.5V12.8z" fill="#252526"/><path d="M0 9.5h8L5 13.3V17H3V13.3z" fill="#C0C0C0"/></svg><div class="t " style="left:96px;top:1091px;">Calculator</div><svg class="a" style="left:52.5px;top:1084.5px" width="8" height="12" viewBox="0 0 8 12" overflow="visible"><path d="M1.5 1.6L5.9 6L1.5 10.4z" fill="none" stroke="#D8D8D8" stroke-width="1.1"/></svg><svg class="a" style="left:76px;top:1082px" width="16" height="16" viewBox="0 0 16 16" overflow="visible"><path d="M0 3h9.3v2H13.2v9.1H0z" fill="#DCB67A"/><path d="M1 4.1h7.4v0.9H1z" fill="#252526"/><path d="M-0.4 7.4h9.2L5.6 11.4V16.3H2.4V11.4z" fill="#252526"/><path d="M0 7.9h8.1L5.1 11.6V16H2.9V11.6z" fill="#C0C0C0"/></svg><div class="t " style="left:96px;top:1109px;">Construtor</div><svg class="a" style="left:52.5px;top:1102.5px" width="8" height="12" viewBox="0 0 8 12" overflow="visible"><path d="M1.5 1.6L5.9 6L1.5 10.4z" fill="none" stroke="#D8D8D8" stroke-width="1.1"/></svg><svg class="a" style="left:76px;top:1100px" width="16" height="16" viewBox="0 0 16 16" overflow="visible"><path d="M0 3h9.3v2H13.2v9.1H0z" fill="#DCB67A"/><path d="M1 4.1h7.4v0.9H1z" fill="#252526"/><path d="M-0.4 7.4h9.2L5.6 11.4V16.3H2.4V11.4z" fill="#252526"/><path d="M0 7.9h8.1L5.1 11.6V16H2.9V11.6z" fill="#C0C0C0"/></svg><div class="t " style="left:96px;top:1127px;">Data</div><svg class="a" style="left:52.5px;top:1120.5px" width="8" height="12" viewBox="0 0 8 12" overflow="visible"><path d="M1.5 1.6L5.9 6L1.5 10.4z" fill="none" stroke="#D8D8D8" stroke-width="1.1"/></svg><svg class="a" style="left:76px;top:1118px" width="16" height="16" viewBox="0 0 16 16" overflow="visible"><path d="M0 3h9.3v2H13.2v9.1H0z" fill="#DCB67A"/><path d="M1 4.1h7.4v0.9H1z" fill="#252526"/><path d="M-0.4 7.4h9.2L5.6 11.4V16.3H2.4V11.4z" fill="#252526"/><path d="M0 7.9h8.1L5.1 11.6V16H2.9V11.6z" fill="#C0C0C0"/></svg><div class="t " style="left:96px;top:1145px;">Database</div><svg class="a" style="left:52.5px;top:1138.5px" width="8" height="12" viewBox="0 0 8 12" overflow="visible"><path d="M1.5 1.6L5.9 6L1.5 10.4z" fill="none" stroke="#D8D8D8" stroke-width="1.1"/></svg><svg class="a" style="left:76px;top:1136px" width="16" height="16" viewBox="0 0 16 16" overflow="visible"><path d="M0 3h9.3v2H13.2v9.1H0z" fill="#DCB67A"/><path d="M1 4.1h7.4v0.9H1z" fill="#252526"/><path d="M-0.4 7.4h9.2L5.6 11.4V16.3H2.4V11.4z" fill="#252526"/><path d="M0 7.9h8.1L5.1 11.6V16H2.9V11.6z" fill="#C0C0C0"/></svg><div class="t " style="left:96px;top:1163px;">Error</div><svg class="a" style="left:52.5px;top:1156.5px" width="8" height="12" viewBox="0 0 8 12" overflow="visible"><path d="M1.5 1.6L5.9 6L1.5 10.4z" fill="none" stroke="#D8D8D8" stroke-width="1.1"/></svg><svg class="a" style="left:76px;top:1154px" width="16" height="16" viewBox="0 0 16 16" overflow="visible"><path d="M0 3h9.3v2H13.2v9.1H0z" fill="#DCB67A"/><path d="M1 4.1h7.4v0.9H1z" fill="#252526"/><path d="M-0.4 7.4h9.2L5.6 11.4V16.3H2.4V11.4z" fill="#252526"/><path d="M0 7.9h8.1L5.1 11.6V16H2.9V11.6z" fill="#C0C0C0"/></svg><div class="t " style="left:96px;top:1181px;">File</div><svg class="a" style="left:52.5px;top:1174.5px" width="8" height="12" viewBox="0 0 8 12" overflow="visible"><path d="M1.5 1.6L5.9 6L1.5 10.4z" fill="none" stroke="#D8D8D8" stroke-width="1.1"/></svg><svg class="a" style="left:76px;top:1172px" width="16" height="16" viewBox="0 0 16 16" overflow="visible"><path d="M0 3h9.3v2H13.2v9.1H0z" fill="#DCB67A"/><path d="M1 4.1h7.4v0.9H1z" fill="#252526"/><path d="M-0.4 7.4h9.2L5.6 11.4V16.3H2.4V11.4z" fill="#252526"/><path d="M0 7.9h8.1L5.1 11.6V16H2.9V11.6z" fill="#C0C0C0"/></svg><div class="t " style="left:96px;top:1199px;">FileSystem</div><svg class="a" style="left:53px;top:1195px" width="8" height="8" viewBox="0 0 8 8" overflow="visible"><path d="M7 0.6V7H0.6z" fill="#E0E0E0"/></svg><svg class="a" style="left:76px;top:1189px" width="16" height="18" viewBox="0 0 16 18" overflow="visible"><path d="M0.5 16V4.4H8L9.7 6.2H13.2V10.5" fill="none" stroke="#DCB67A" stroke-width="1"/><path d="M0 10.4H14L12 15.7H0z" fill="#DCB67A"/><path d="M-0.5 9h9.1L5.5 12.8V17.6H2.5V12.8z" fill="#252526"/><path d="M0 9.5h8L5 13.3V17H3V13.3z" fill="#C0C0C0"/></svg><div class="t " style="left:114px;top:1217px;">Fat32</div><svg class="a" style="left:71px;top:1213px" width="8" height="8" viewBox="0 0 8 8" overflow="visible"><path d="M7 0.6V7H0.6z" fill="#E0E0E0"/></svg><svg class="a" style="left:94px;top:1207px" width="16" height="18" viewBox="0 0 16 18" overflow="visible"><path d="M0.5 16V4.4H8L9.7 6.2H13.2V10.5" fill="none" stroke="#DCB67A" stroke-width="1"/><path d="M0 10.4H14L12 15.7H0z" fill="#DCB67A"/><path d="M-0.5 9h9.1L5.5 12.8V17.6H2.5V12.8z" fill="#252526"/><path d="M0 9.5h8L5 13.3V17H3V13.3z" fill="#C0C0C0"/></svg><div class="t " style="left:132px;top:1235px;">TestFat32.cpp</div><svg class="a" style="left:88.5px;top:1228.5px" width="8" height="12" viewBox="0 0 8 12" overflow="visible"><path d="M1.5 1.6L5.9 6L1.5 10.4z" fill="none" stroke="#D8D8D8" stroke-width="1.1"/></svg><svg class="a" style="left:111px;top:1228px" width="16" height="16" viewBox="0 0 16 16" overflow="visible"><path d="M1.6 5.3h2.2v-2.2h2v2.2h2.2v2h-2.2v2.2h-2v-2.2H1.6z" fill="#D685D8"/><path d="M7.8 7.5h2.2v-2.2h2v2.2h2.2v2h-2.2v2.2h-2v-2.2H7.8z" fill="#D685D8"/></svg><svg class="a" style="left:102px;top:1231px" width="7" height="9" viewBox="0 0 7 9" overflow="visible"><path d="M1.4 3.2Q3.55 0.2 5.7 3.2" fill="none" stroke="#2DB1F5" stroke-width="1.3"/><path d="M0.9 4h5.3v4.1H0.9z" fill="#2DB1F5"/><path d="M3 4.7h1.1v1.8H3z" fill="#1E1E1E"/></svg><div class="t " style="left:132px;top:1253px;">TestFat32Common.cpp</div><svg class="a" style="left:88.5px;top:1246.5px" width="8" height="12" viewBox="0 0 8 12" overflow="visible"><path d="M1.5 1.6L5.9 6L1.5 10.4z" fill="none" stroke="#D8D8D8" stroke-width="1.1"/></svg><svg class="a" style="left:111px;top:1246px" width="16" height="16" viewBox="0 0 16 16" overflow="visible"><path d="M1.6 5.3h2.2v-2.2h2v2.2h2.2v2h-2.2v2.2h-2v-2.2H1.6z" fill="#D685D8"/><path d="M7.8 7.5h2.2v-2.2h2v2.2h2.2v2h-2.2v2.2h-2v-2.2H7.8z" fill="#D685D8"/></svg><svg class="a" style="left:102px;top:1249px" width="7" height="9" viewBox="0 0 7 9" overflow="visible"><path d="M1.4 3.2Q3.55 0.2 5.7 3.2" fill="none" stroke="#2DB1F5" stroke-width="1.3"/><path d="M0.9 4h5.3v4.1H0.9z" fill="#2DB1F5"/><path d="M3 4.7h1.1v1.8H3z" fill="#1E1E1E"/></svg><div class="t " style="left:132px;top:1271px;">TestFat32Common.h</div><svg class="a" style="left:88.5px;top:1264.5px" width="8" height="12" viewBox="0 0 8 12" overflow="visible"><path d="M1.5 1.6L5.9 6L1.5 10.4z" fill="none" stroke="#D8D8D8" stroke-width="1.1"/></svg><svg class="a" style="left:113px;top:1264px" width="16" height="16" viewBox="0 0 16 16" overflow="visible"><path d="M1.5 1.5H8.5L10.5 3.5V12.5H1.5z" fill="#1E1E1E" stroke="#C8C8C8" stroke-width="1.1"/><path d="M8 1H9L11 3V4H8z" fill="#C8C8C8"/><path d="M4 4.5h1.3v2.2h2.4q1 0 1 1V11H7.4V8H5.3V11H4z" fill="#D685D8"/></svg><svg class="a" style="left:102px;top:1267px" width="7" height="9" viewBox="0 0 7 9" overflow="visible"><path d="M1.4 3.2Q3.55 0.2 5.7 3.2" fill="none" stroke="#2DB1F5" stroke-width="1.3"/><path d="M0.9 4h5.3v4.1H0.9z" fill="#2DB1F5"/><path d="M3 4.7h1.1v1.8H3z" fill="#1E1E1E"/></svg><div class="t " style="left:132px;top:1289px;">TestFatCache.cpp</div><svg class="a" style="left:88.5px;top:1282.5px" width="8" height="12" viewBox="0 0 8 12" overflow="visible"><path d="M1.5 1.6L5.9 6L1.5 10.4z" fill="none" stroke="#D8D8D8" stroke-width="1.1"/></svg><svg class="a" style="left:111px;top:1282px" width="16" height="16" viewBox="0 0 16 16" overflow="visible"><path d="M1.6 5.3h2.2v-2.2h2v2.2h2.2v2h-2.2v2.2h-2v-2.2H1.6z" fill="#D685D8"/><path d="M7.8 7.5h2.2v-2.2h2v2.2h2.2v2h-2.2v2.2h-2v-2.2H7.8z" fill="#D685D8"/></svg><svg class="a" style="left:102px;top:1285px" width="7" height="9" viewBox="0 0 7 9" overflow="visible"><path d="M1.4 3.2Q3.55 0.2 5.7 3.2" fill="none" stroke="#2DB1F5" stroke-width="1.3"/><path d="M0.9 4h5.3v4.1H0.9z" fill="#2DB1F5"/><path d="M3 4.7h1.1v1.8H3z" fill="#1E1E1E"/></svg><div class="t " style="left:114px;top:1307px;">Underlying</div><svg class="a" style="left:70.5px;top:1300.5px" width="8" height="12" viewBox="0 0 8 12" overflow="visible"><path d="M1.5 1.6L5.9 6L1.5 10.4z" fill="none" stroke="#D8D8D8" stroke-width="1.1"/></svg><svg class="a" style="left:94px;top:1298px" width="16" height="16" viewBox="0 0 16 16" overflow="visible"><path d="M0 3h9.3v2H13.2v9.1H0z" fill="#DCB67A"/><path d="M1 4.1h7.4v0.9H1z" fill="#252526"/><path d="M-0.4 7.4h9.2L5.6 11.4V16.3H2.4V11.4z" fill="#252526"/><path d="M0 7.9h8.1L5.1 11.6V16H2.9V11.6z" fill="#C0C0C0"/></svg><div class="t " style="left:96px;top:1325px;">Function</div><svg class="a" style="left:52.5px;top:1318.5px" width="8" height="12" viewBox="0 0 8 12" overflow="visible"><path d="M1.5 1.6L5.9 6L1.5 10.4z" fill="none" stroke="#D8D8D8" stroke-width="1.1"/></svg><svg class="a" style="left:76px;top:1316px" width="16" height="16" viewBox="0 0 16 16" overflow="visible"><path d="M0 3h9.3v2H13.2v9.1H0z" fill="#DCB67A"/><path d="M1 4.1h7.4v0.9H1z" fill="#252526"/><path d="M-0.4 7.4h9.2L5.6 11.4V16.3H2.4V11.4z" fill="#252526"/><path d="M0 7.9h8.1L5.1 11.6V16H2.9V11.6z" fill="#C0C0C0"/></svg><div class="t " style="left:96px;top:1343px;">Math</div><svg class="a" style="left:52.5px;top:1336.5px" width="8" height="12" viewBox="0 0 8 12" overflow="visible"><path d="M1.5 1.6L5.9 6L1.5 10.4z" fill="none" stroke="#D8D8D8" stroke-width="1.1"/></svg><svg class="a" style="left:76px;top:1334px" width="16" height="16" viewBox="0 0 16 16" overflow="visible"><path d="M0 3h9.3v2H13.2v9.1H0z" fill="#DCB67A"/><path d="M1 4.1h7.4v0.9H1z" fill="#252526"/><path d="M-0.4 7.4h9.2L5.6 11.4V16.3H2.4V11.4z" fill="#252526"/><path d="M0 7.9h8.1L5.1 11.6V16H2.9V11.6z" fill="#C0C0C0"/></svg><div class="t " style="left:96px;top:1361px;">Memory</div><svg class="a" style="left:52.5px;top:1354.5px" width="8" height="12" viewBox="0 0 8 12" overflow="visible"><path d="M1.5 1.6L5.9 6L1.5 10.4z" fill="none" stroke="#D8D8D8" stroke-width="1.1"/></svg><svg class="a" style="left:76px;top:1352px" width="16" height="16" viewBox="0 0 16 16" overflow="visible"><path d="M0 3h9.3v2H13.2v9.1H0z" fill="#DCB67A"/><path d="M1 4.1h7.4v0.9H1z" fill="#252526"/><path d="M-0.4 7.4h9.2L5.6 11.4V16.3H2.4V11.4z" fill="#252526"/><path d="M0 7.9h8.1L5.1 11.6V16H2.9V11.6z" fill="#C0C0C0"/></svg><div class="a" style="left:383px;top:72px;width:113px;height:21px;background:#007ACC"></div><div class="a" style="left:383px;top:91px;width:1339px;height:2px;background:#007ACC"></div><div class="t " style="left:387px;top:82px;">FatVolume.h</div><div class="t " style="left:501px;top:82px;">TestFat32Common.h</div><div class="t " style="left:659px;top:82px;">TestFatCache.cpp</div><div class="t " style="left:800px;top:82px;">TestFat32Common.cpp</div><div class="t " style="left:971px;top:82px;">TestFat32.cpp</div><div class="t " style="left:1091px;top:82px;">XMLEntity.cpp</div><div class="t " style="left:1217px;top:82px;">XMLEntity.h</div><div class="t " style="left:1330px;top:82px;">PropertiesFile.cpp</div><div class="t " style="left:1473px;top:82px;">PropertiesFile.h</div><div class="t " style="left:1603px;top:82px;">Chars.h</div><div class="t " style="left:1692px;top:82px;">Markup.h</div><div class="a" style="left:383px;top:93px;width:1339px;height:22px;background:#2D2D30"></div><div class="a" style="left:383px;top:93px;width:715px;height:20px;background:#333337;border:1px solid #3F3F46;border-top:none"></div><div class="a" style="left:1101px;top:93px;width:621px;height:20px;background:#333337;border:1px solid #3F3F46;border-top:none;border-right:none"></div><div class="a" style="left:383px;top:113px;width:1339px;height:2px;background:#3A3A3E"></div><div class="t " style="left:404px;top:104px;">BaseLib</div><div class="t " style="left:1122px;top:104px;">CFatVolume</div><div class="a" style="left:383px;top:114px;width:1339px;height:1241px;background:#1E1E1E"></div><div class="a" style="left:383px;top:114px;width:17px;height:1241px;background:#333333"></div><div class="a" style="left:382px;top:1355px;width:1340px;height:16px;background:#3E3E42"></div><div class="a" style="left:384px;top:1356px;width:58px;height:13px;background:#333337"></div><div class="a" style="left:382px;top:93px;width:1px;height:1278px;background:#3F3F46"></div><div class="t " style="left:385px;top:1363px;font-size:11px">99 %</div><div class="t " style="left:483px;top:1363px;">No issues found</div><div class="a" style="left:638px;top:1356px;width:179px;height:13px;background:#2D2D30"></div><div class="t " style="left:659px;top:1363px;font-size:10.5px;letter-spacing:-0.05px">0 changes</div><div class="t " style="left:715px;top:1363px;font-size:10.5px;letter-spacing:-0.05px">0 authors, 0 changes</div><div class="a" style="left:0;top:1377px;width:1722px;height:22px;background:#007ACC"></div><div class="t " style="left:28px;top:1389px;color:#FFFFFF">Ready</div><div class="a" style="left:437px;top:249px;width:1285px;height:18px;border:2px solid #414141;border-right:none"></div><div class="a" style="left:480px;top:249px;width:72px;height:18px;background:#1B487A;border:1px solid #6B84A6"></div><div class="a" style="left:383px;top:114px;width:1339px;height:1241px;overflow:hidden"><div class="code" style="left:55px;top:0;transform:scaleX(0.9427);transform-origin:0 0"><div class="ln" style="top:2.00px"><span class="p">#ifndef </span><span class="w">__FAT_VOLUME_H__</span></div><div class="ln" style="top:18.83px"><span class="p">#define </span><span class="m">__FAT_VOLUME_H__</span></div><div class="ln" style="top:35.66px"><span class="p">#include </span><span class="q">&quot;</span><span class="s">Chars.h</span><span class="q">&quot;</span></div><div class="ln" style="top:52.49px"><span class="p">#include </span><span class="q">&quot;</span><span class="s">FileDrive.h</span><span class="q">&quot;</span></div><div class="ln" style="top:69.32px"><span class="p">#include </span><span class="q">&quot;</span><span class="s">FatInfoSectorCache.h</span><span class="q">&quot;</span></div><div class="ln" style="top:86.15px"><span class="p">#include </span><span class="q">&quot;</span><span class="s">FatCommon.h</span><span class="q">&quot;</span></div><div class="ln" style="top:102.98px"></div><div class="ln" style="top:119.81px"></div><div class="ln" style="top:136.64px"><span class="k">class</span> <span class="sel"><span class="ty">CFatVolume</span></span></div><div class="ln" style="top:153.47px"><span class="br">{</span></div><div class="ln" style="top:170.30px"><span class="k">protected</span>:</div><div class="ln" style="top:187.13px">    <span class="ty">uint32</span>                  <span class="w">muiID</span>;</div><div class="ln" style="top:203.96px">    <span class="ty">uint32</span>                  <span class="w">muiFatSize</span>;</div><div class="ln" style="top:220.79px">    <span class="ty">uint32</span>                  <span class="w">muiRootCluster</span>;</div><div class="ln" style="top:237.62px">    <span class="ty">uint32</span>                  <span class="w">muiRootSector</span>;</div><div class="ln" style="top:254.45px">    <span class="ty">uint32</span>                  <span class="w">muiFirstDataSector</span>;</div><div class="ln" style="top:271.28px">    <span class="ty">uint32</span>                  <span class="w">muiHiddenSectors</span>;</div><div class="ln" style="top:288.11px">    <span class="ty">uint32</span>                  <span class="w">muiNoOfSectors</span>;</div><div class="ln" style="top:304.94px">    <span class="ty">uint32</span>                  <span class="w">muiNoOfDataSectors</span>;</div><div class="ln" style="top:321.77px">    <span class="ty">uint32</span>                  <span class="w">muiNoOfClusters</span>;</div><div class="ln" style="top:338.60px">    <span class="ty">uint32</span>                  <span class="w">muiNoOfReservedSectors</span>;</div><div class="ln" style="top:355.43px">    <span class="ty">uint32</span>                  <span class="w">muiNextFreeCluster</span>;</div><div class="ln" style="top:372.26px">    <span class="ty">uint32</span>                  <span class="w">muiTotalFreeClusters</span>;</div><div class="ln" style="top:389.09px">    <span class="ty">uint32</span>                  <span class="w">muiFileSystemInfoSector</span>;</div><div class="ln" style="top:405.92px">    <span class="ty">uint32</span>                  <span class="w">muiBytesPerCluster</span>;</div><div class="ln" style="top:422.75px">    <span class="ty">uint16</span>                  <span class="w">muiRootDirectorySectors</span>;</div><div class="ln" style="top:439.58px">    <span class="ty">uint16</span>                  <span class="w">muiBytesPerSector</span>;</div><div class="ln" style="top:456.41px">    <span class="ty">uint16</span>                  <span class="w">muiNoOfSectorsPerCluster</span>;</div><div class="ln" style="top:473.24px">    <span class="k">bool</span>                    <span class="w">mbUseLongFilenames</span>;</div><div class="ln" style="top:490.07px">    <span class="ty">EFatFileSystemType</span>      <span class="w">meFileSystem</span>;</div><div class="ln" style="top:506.90px">    <span class="ty">uint8</span>                   <span class="w">muiNoOfFatTables</span>;</div><div class="ln" style="top:523.73px">    <span class="ty">CChars</span>                  <span class="w">mszLabel</span>;</div><div class="ln" style="top:540.56px"></div><div class="ln" style="top:557.39px">    <span class="ty">CFileDrive</span>*             <span class="w">mpcDevice</span>;</div><div class="ln" style="top:574.22px">    <span class="ty">CFatInfoSectorCache</span>     <span class="w">mcSectorCache</span>;</div><div class="ln" style="top:591.05px"></div><div class="ln" style="top:607.88px">    <span class="ty">SFatBIOSParameterBlock</span>  <span class="w">msBPB</span>;</div><div class="ln" style="top:624.71px"></div><div class="ln" style="top:641.54px"><span class="k">public</span>:</div><div class="ln" style="top:658.37px">    <span class="ty">EFatCode</span>                <span class="f">Mount</span>(<span class="ty">CFileDrive</span>* <span class="pr">pcDevice</span>);</div><div class="ln" style="top:675.20px">    <span class="ty">EFatCode</span>                <span class="f">Unmount</span>(<span class="k">void</span>);</div><div class="ln" style="top:692.03px">    <span class="ty">EFatCode</span>                <span class="f">Flush</span>(<span class="k">void</span>);</div><div class="ln" style="top:708.86px">    <span class="k">bool</span>                    <span class="f">Erase</span>(<span class="ty">uint32</span> <span class="pr">uiStartSector</span>, <span class="ty">uint32</span> <span class="pr">uiStopSectorInclusive</span>);</div><div class="ln" style="top:725.69px">    <span class="ty">EFatCode</span>                <span class="f">CreateDirectory</span>(<span class="k">char</span>* <span class="pr">szDirectory</span>);</div><div class="ln" style="top:742.52px">    <span class="ty">EFatCode</span>                <span class="f">Rename</span>(<span class="k">char</span>* <span class="pr">szOriginalFilename</span>, <span class="k">char</span>* <span class="pr">szNewFilename</span>);</div><div class="ln" style="top:759.35px">    <span class="ty">EFatCode</span>                <span class="f">Delete</span>(<span class="k">char</span>* <span class="pr">szFilename</span>);</div><div class="ln" style="top:776.18px"></div><div class="ln" style="top:793.01px">    <span class="ty">EFatCode</span>                <span class="f">AllocateClusters</span>(<span class="ty">uint32</span> <span class="pr">uiClustersNeeded</span>, <span class="ty">uint32</span> <span class="pr">uiCursorClusterInVolume</span>, <span class="ty">uint32</span>* <span class="pr">puiNewClusterInVolume</span>, <span class="ty">uint32</span> <span class="pr">uiPreviousCluster</span>);</div><div class="ln" style="top:809.84px">    <span class="ty">EFatCode</span>                <span class="f">FreeDirectoryEntry</span>(<span class="ty">SFatDirectoryEntry</span>* <span class="pr">psEntry</span>);</div><div class="ln" style="top:826.67px">    <span class="ty">SFatCache</span>               <span class="f">ReadSector</span>(<span class="ty">uint32</span> <span class="pr">uiFatInfoSector</span>, <span class="k">bool</span> <span class="pr">bLock</span> = <span class="k">false</span>);</div><div class="ln" style="top:843.50px">    <span class="k">void</span>                    <span class="f">DirtySector</span>(<span class="ty">SFatCache</span> <span class="pr">sCachedSector</span>);</div><div class="ln" style="top:860.33px">    <span class="k">void</span>                    <span class="f">CalculateFATIndexAndOffset</span>(<span class="ty">uint32</span>* <span class="pr">puiOffsetInSector</span>, <span class="ty">uint32</span> <span class="pr">uiClusterIndex</span>, <span class="ty">uint32</span>* <span class="pr">puiSector</span>);</div><div class="ln" style="top:877.16px">    <span class="ty">EFatCode</span>                <span class="f">GetFileEntry</span>(<span class="k">char</span>* <span class="pr">szPath</span>, <span class="ty">SFatDirectoryEntry</span>* <span class="pr">psEntry</span>);</div><div class="ln" style="top:893.99px">    <span class="ty">uint32</span>                  <span class="f">CalculateFirstSectorOfCluster</span>(<span class="ty">uint32</span> <span class="pr">uiCluster</span>);</div><div class="ln" style="top:910.82px">    <span class="ty">EFatCode</span>                <span class="f">GetNextClusterEntry</span>(<span class="ty">uint32</span> <span class="pr">uiCurrentCluster</span>, <span class="ty">fatEntry</span>* <span class="pr">puiNextCluster</span>);</div><div class="ln" style="top:927.65px">    <span class="ty">EFatCode</span>                <span class="f">SeekByClusterCount</span>(<span class="ty">uint32</span> <span class="pr">uiClusterIndex</span>, <span class="ty">uint16</span> <span class="pr">uiClusterCount</span>, <span class="ty">uint32</span>* <span class="pr">puiNewClusterIndex</span>);</div><div class="ln" style="top:944.48px">    <span class="k">bool</span>                    <span class="f">FatIsEOFEntry</span>(<span class="ty">fatEntry</span> <span class="pr">uiFat</span>);</div><div class="ln" style="top:961.31px">    <span class="ty">EFatCode</span>                <span class="f">FreeChain</span>(<span class="ty">uint32</span> <span class="pr">uiClusterIndex</span>);</div><div class="ln" style="top:978.14px">    <span class="ty">EFatCode</span>                <span class="f">SetClusterEntry</span>(<span class="ty">uint32</span> <span class="pr">uiClusterIndex</span>, <span class="ty">fatEntry</span> <span class="pr">uiClusterInVolume</span>);</div><div class="ln" style="top:994.97px">    <span class="ty">EFatCode</span>                <span class="f">ReadFatEntry</span>(<span class="ty">uint32</span> <span class="pr">uiOffsetInSector</span>, <span class="ty">uint32</span> <span class="pr">uiClusterIndex</span>, <span class="ty">uint32</span> <span class="pr">uiFat12Sector</span>, <span class="ty">fatEntry</span>* <span class="pr">puiFatEntry</span>);</div><div class="ln" style="top:1011.80px">    <span class="ty">EFatCode</span>                <span class="f">UpdateDirectoryEntry</span>(<span class="ty">SFatDirectoryEntry</span>* <span class="pr">psEntry</span>, <span class="ty">uint32</span> <span class="pr">uiFirstCluster</span>, <span class="ty">uint32</span> <span class="pr">uiNewClusterInVolume</span>, <span class="ty">uint32</span> <span class="pr">uiClustersInFile</span>);</div><div class="ln" style="top:1028.63px">    <span class="ty">EFatCode</span>                <span class="f">FindFirstFATEntry</span>(<span class="k">char</span>* <span class="pr">szParentPath</span>, <span class="ty">uint8</span> <span class="pr">uiAttributes</span>, <span class="ty">SFatDirectoryEntry</span>** <span class="pr">ppsDirectoryEntry</span>, <span class="ty">SFatFileSystemQuery</span>* <span class="pr">psQuery</span>);</div><div class="ln" style="top:1045.46px">    <span class="ty">EFatCode</span>                <span class="f">FindNextFATEntry</span>(<span class="ty">SFatDirectoryEntry</span>** <span class="pr">ppsDirectoryEntry</span>, <span class="ty">SFatFileSystemQuery</span>* <span class="pr">psQuery</span>);</div><div class="ln" style="top:1062.29px">    <span class="ty">EFatCode</span>                <span class="f">CreateFATEntry</span>(<span class="ty">SFatRawDirectoryEntry</span>* <span class="pr">psParentDirectory</span>, <span class="k">char</span>* <span class="pr">szName</span>, <span class="ty">uint8</span> <span class="pr">uiAttributes</span>, <span class="ty">uint32</span> <span class="pr">uiEntryCluster</span>, <span class="ty">SFatDirectoryEntry</span>* <span class="pr">psNewEntry</span>);</div><div class="ln" style="top:1079.12px">    <span class="ty">fatEntry</span>                <span class="f">GetEndOfClusterMarker</span>(<span class="k">void</span>);</div><div class="ln" style="top:1095.95px">    <span class="ty">fatEntry</span>                <span class="f">GetBadClusterMarker</span>(<span class="k">void</span>);</div><div class="ln" style="top:1112.78px">    <span class="ty">fatEntry</span>                <span class="f">GetClusterEntryMask</span>(<span class="k">void</span>);</div><div class="ln" style="top:1129.61px">    <span class="ty">uint32</span>                  <span class="f">GetEntryCluster</span>(<span class="ty">SFatRawDirectoryEntry</span>* <span class="pr">psEntry</span>);</div><div class="ln" style="top:1146.44px"></div><div class="ln" style="top:1163.27px">    <span class="ty">EFatCode</span>                <span class="f">ValidateFatCache</span>(<span class="ty">SFatCache</span> <span class="pr">sCache</span>);</div><div class="ln" style="top:1180.10px"></div><div class="ln" style="top:1196.93px">    <span class="k">void</span>                    <span class="f">FillDirectoryEntryFromRawEntry</span>(<span class="ty">SFatDirectoryEntry</span>* <span class="pr">psEntry</span>, <span class="ty">SFatRawDirectoryEntry</span>* <span class="pr">psRawEntry</span>);</div><div class="ln" style="top:1213.76px"></div><div class="ln" style="top:1230.59px">    <span class="c">//Getters</span></div></div></div><div class="a" style="left:537px;top:251px;width:1px;height:14px;background:#DCDCDC"></div><div class="a" style="left:428px;top:119px;width:9px;height:9px;border:1px solid #A5A5A5;background:#1E1E1E"></div><div class="a" style="left:430px;top:123px;width:5px;height:1px;background:#D0D0D0"></div><div class="a" style="left:428px;top:152px;width:9px;height:9px;border:1px solid #A5A5A5;background:#1E1E1E"></div><div class="a" style="left:430px;top:156px;width:5px;height:1px;background:#D0D0D0"></div><div class="a" style="left:428px;top:254px;width:9px;height:9px;border:1px solid #A5A5A5;background:#1E1E1E"></div><div class="a" style="left:430px;top:258px;width:5px;height:1px;background:#D0D0D0"></div><div class="a" style="left:432px;top:128px;width:1px;height:24px;background:#A5A5A5"></div><div class="a" style="left:432px;top:161px;width:1px;height:93px;background:#A5A5A5"></div><div class="a" style="left:432px;top:215px;width:4px;height:1px;background:#A5A5A5"></div><div class="a" style="left:432px;top:263px;width:1px;height:1092px;background:#A5A5A5"></div><div class="a" style="left:440px;top:300px;width:1px;height:456px;background-image:linear-gradient(#7A7A7A 50%,transparent 50%);background-size:1px 6px"></div><div class="a" style="left:440px;top:773px;width:1px;height:582px;background-image:linear-gradient(#7A7A7A 50%,transparent 50%);background-size:1px 6px"></div><svg class="a" style="left:0;top:0" width="1722" height="1399" viewBox="0 0 1722 1399"><path fill-rule="evenodd" d="M11.8 11L14.2 9.8L19 13.4L26.8 5.9L32 8.2V23.7L26.8 26L19 18.2L14.2 21.8L11.8 20.6zM26.8 12.2L22.4 15.9L26.8 19.7zM14.2 12.9V18.7L17 15.8z" fill="#FFFFFF"/><rect x="12" y="37" width="1.2" height="1.2" fill="#5A5A5A"/><rect x="16" y="37" width="1.2" height="1.2" fill="#5A5A5A"/><rect x="14" y="39" width="1.2" height="1.2" fill="#5A5A5A"/><rect x="12" y="41" width="1.2" height="1.2" fill="#5A5A5A"/><rect x="16" y="41" width="1.2" height="1.2" fill="#5A5A5A"/><rect x="14" y="43" width="1.2" height="1.2" fill="#5A5A5A"/><rect x="12" y="45" width="1.2" height="1.2" fill="#5A5A5A"/><rect x="16" y="45" width="1.2" height="1.2" fill="#5A5A5A"/><rect x="14" y="47" width="1.2" height="1.2" fill="#5A5A5A"/><rect x="12" y="49" width="1.2" height="1.2" fill="#5A5A5A"/><rect x="16" y="49" width="1.2" height="1.2" fill="#5A5A5A"/><rect x="14" y="51" width="1.2" height="1.2" fill="#5A5A5A"/><rect x="12" y="53" width="1.2" height="1.2" fill="#5A5A5A"/><rect x="16" y="53" width="1.2" height="1.2" fill="#5A5A5A"/><circle cx="32" cy="46" r="6.1" fill="#75BEFF"/><path d="M28.5 46h7M31 43.3L28.4 46L31 48.7" fill="none" stroke="#2D2D30" stroke-width="1.6"/><path d="M46 45h6l-3 3z" fill="#999"/><circle cx="66" cy="46" r="6" fill="#555555"/><path d="M62.6 46h7M67 43.3L69.6 46L67 48.7" fill="none" stroke="#2D2D30" stroke-width="1.6"/><rect x="81" y="36" width="1" height="20" fill="#3F3F46"/><path d="M95 38.7H102L103.1 39.8V47H95z" fill="#75BEFF"/><rect x="97.4" y="38.7" width="3.5" height="2.8" fill="#2D2D30"/><rect x="98.7" y="39.3" width="1.1" height="1.7" fill="#75BEFF"/><path d="M88.7 44.6H95.8L97.1 45.9V53H88.7z" fill="#75BEFF" stroke="#2D2D30" stroke-width="0.8"/><rect x="91.1" y="44.6" width="3.5" height="2.9" fill="#2D2D30"/><rect x="92.4" y="45.2" width="1.1" height="1.7" fill="#75BEFF"/><rect x="111" y="36" width="1" height="20" fill="#3F3F46"/><path d="M120.6 39V44.3H125.5" fill="none" stroke="#5E5E5E" stroke-width="1.7"/><path d="M121.2 43.8C123.5 39.5 131.5 39 131.5 45.5C131.5 48 129 50 125 52.5" fill="none" stroke="#5E5E5E" stroke-width="2.1"/><path d="M141 45h6l-3 3z" fill="#666"/><path d="M166.5 39V44.3H161.6" fill="none" stroke="#5E5E5E" stroke-width="1.7"/><path d="M165.9 43.8C163.6 39.5 155.6 39 155.6 45.5C155.6 48 158 50 162 52.5" fill="none" stroke="#5E5E5E" stroke-width="2.1"/><path d="M176 45h6l-3 3z" fill="#666"/><rect x="189" y="36" width="1" height="20" fill="#3F3F46"/><path d="M251 45h6l-3 3z" fill="#999"/><path d="M367 45h6l-3 3z" fill="#999"/><path d="M388 40L396.5 46.2L388 52.4z" fill="#6DC56D"/><path d="M545 45h6l-3 3z" fill="#999"/><path d="M565 40C569 43 571 45 570 49C569 52 566 52.5 564 52C561 51 560.5 48 562.5 45.5C563 47 564 47.5 564.5 47C564 44 565 42 565 40z" fill="#4A4A4A"/><rect x="580" y="37" width="1" height="18" fill="#3F3F46"/><path d="M588 40h6l1.3 1.5H601V51H588z" fill="#DCB67A"/><circle cx="598.5" cy="48" r="2.3" fill="none" stroke="#75BEFF" stroke-width="1.4"/><path d="M600.2 49.7L602.5 52" stroke="#75BEFF" stroke-width="1.6"/><rect x="610" y="37" width="1" height="18" fill="#3F3F46"/><rect x="618.6" y="40.4" width="13" height="11.2" fill="#1E1E1E" stroke="#D0D0D0" stroke-width="1.2"/><path d="M620.5 46.6L625 42.3L629.5 46.6H628.2V51.3H621.8V46.6z" fill="#75BEFF"/><rect x="624" y="48" width="2" height="3.3" fill="#1E1E1E"/><rect x="627" y="42" width="1.2" height="1.2" fill="#D0D0D0"/><rect x="629" y="42" width="1.2" height="1.2" fill="#D0D0D0"/><rect x="640" y="48.6" width="6" height="1" fill="#999"/><path d="M640 52.4h6l-3 2.8z" fill="#999"/><rect x="651" y="37" width="1.2" height="1.2" fill="#5A5A5A"/><rect x="655" y="37" width="1.2" height="1.2" fill="#5A5A5A"/><rect x="653" y="39" width="1.2" height="1.2" fill="#5A5A5A"/><rect x="651" y="41" width="1.2" height="1.2" fill="#5A5A5A"/><rect x="655" y="41" width="1.2" height="1.2" fill="#5A5A5A"/><rect x="653" y="43" width="1.2" height="1.2" fill="#5A5A5A"/><rect x="651" y="45" width="1.2" height="1.2" fill="#5A5A5A"/><rect x="655" y="45" width="1.2" height="1.2" fill="#5A5A5A"/><rect x="653" y="47" width="1.2" height="1.2" fill="#5A5A5A"/><rect x="651" y="49" width="1.2" height="1.2" fill="#5A5A5A"/><rect x="655" y="49" width="1.2" height="1.2" fill="#5A5A5A"/><rect x="653" y="51" width="1.2" height="1.2" fill="#5A5A5A"/><rect x="651" y="53" width="1.2" height="1.2" fill="#5A5A5A"/><rect x="655" y="53" width="1.2" height="1.2" fill="#5A5A5A"/><path d="M668.7 37.9h2.6v3.5h3v0.8l-4.3 3.3l-4.3-3.3v-0.8h3z" fill="#D0D0D0"/><rect x="662.7" y="44" width="1.1" height="9.3" fill="#D0D0D0"/><rect x="676.2" y="44" width="1.1" height="9.3" fill="#D0D0D0"/><rect x="665.0" y="46.3" width="2.2" height="2.1" fill="#D0D0D0"/><rect x="668.8000000000001" y="46.3" width="2.2" height="2.1" fill="#D0D0D0"/><rect x="672.6" y="46.3" width="2.2" height="2.1" fill="#D0D0D0"/><path d="M690.7 37.9h2.6v3.5h3v0.8l-4.3 3.3l-4.3-3.3v-0.8h3z" fill="#D0D0D0"/><rect x="684.7" y="44" width="1.1" height="9.3" fill="#D0D0D0"/><rect x="698.2" y="44" width="1.1" height="9.3" fill="#D0D0D0"/><rect x="687.0" y="46.3" width="2.2" height="2.1" fill="#D0D0D0"/><rect x="690.8000000000001" y="46.3" width="2.2" height="2.1" fill="#D0D0D0"/><rect x="694.6" y="46.3" width="2.2" height="2.1" fill="#D0D0D0"/><rect x="662.7" y="50" width="14.6" height="3.3" fill="#D0D0D0"/><rect x="667" y="50.3" width="2.4" height="2.2" fill="#1E1E1E"/><rect x="671" y="50.3" width="2.4" height="2.2" fill="#1E1E1E"/><rect x="684.7" y="52.2" width="14.6" height="1.1" fill="#D0D0D0"/><rect x="689.5" y="49.7" width="2.3" height="2.1" fill="#D0D0D0"/><rect x="693.4" y="49.7" width="2.3" height="2.1" fill="#D0D0D0"/><rect x="707" y="37" width="1" height="18" fill="#3F3F46"/><path d="M716.5 45V51.5H726V43.5L723.5 41H721" fill="none" stroke="#555" stroke-width="1.2"/><path d="M715 43.5h5M718 41.5l2 2l-2 2" fill="none" stroke="#555" stroke-width="1.2"/><rect x="737" y="37" width="1" height="18" fill="#3F3F46"/><path d="M745 46v6.5h14V46" fill="none" stroke="#4F4F4F" stroke-width="1.2"/><path d="M746 40l4 4M750 40l-4 4" stroke="#4F4F4F" stroke-width="1.3"/><rect x="748" y="47" width="1.6" height="1.6" fill="#4F4F4F"/><rect x="751.5" y="47" width="1.6" height="1.6" fill="#4F4F4F"/><rect x="755" y="47" width="1.6" height="1.6" fill="#4F4F4F"/><rect x="750" y="50" width="1.6" height="1.6" fill="#4F4F4F"/><rect x="753.5" y="50" width="1.6" height="1.6" fill="#4F4F4F"/><rect x="767" y="48.6" width="6" height="1" fill="#999"/><path d="M767 52.4h6l-3 2.8z" fill="#999"/><rect x="779" y="37" width="1.2" height="1.2" fill="#5A5A5A"/><rect x="783" y="37" width="1.2" height="1.2" fill="#5A5A5A"/><rect x="781" y="39" width="1.2" height="1.2" fill="#5A5A5A"/><rect x="779" y="41" width="1.2" height="1.2" fill="#5A5A5A"/><rect x="783" y="41" width="1.2" height="1.2" fill="#5A5A5A"/><rect x="781" y="43" width="1.2" height="1.2" fill="#5A5A5A"/><rect x="779" y="45" width="1.2" height="1.2" fill="#5A5A5A"/><rect x="783" y="45" width="1.2" height="1.2" fill="#5A5A5A"/><rect x="781" y="47" width="1.2" height="1.2" fill="#5A5A5A"/><rect x="779" y="49" width="1.2" height="1.2" fill="#5A5A5A"/><rect x="783" y="49" width="1.2" height="1.2" fill="#5A5A5A"/><rect x="781" y="51" width="1.2" height="1.2" fill="#5A5A5A"/><rect x="779" y="53" width="1.2" height="1.2" fill="#5A5A5A"/><rect x="783" y="53" width="1.2" height="1.2" fill="#5A5A5A"/><rect x="793" y="41.6" width="2.8" height="8.3" fill="#4A4A4A"/><rect x="798.2" y="41.6" width="2.8" height="8.3" fill="#4A4A4A"/><rect x="815" y="41.6" width="8.3" height="8.3" fill="#4A4A4A"/><path d="M842 43A4.9 4.9 0 1 1 836.4 45.6" fill="none" stroke="#555555" stroke-width="2.2"/><path d="M835.6 42.1L842 39.2V45z" fill="#555555"/><rect x="856" y="37" width="1" height="18" fill="#3F3F46"/><path d="M864 46h12.5M871 40.8l5.2 5.2L871 51.2" fill="none" stroke="#5A5A5A" stroke-width="1.7"/><path d="M893 40v6M890.3 43.6L893 46.4L895.7 43.6" fill="none" stroke="#75BEFF" stroke-width="1.7"/><circle cx="893" cy="51.2" r="2" fill="#D0D0D0"/><path d="M910 47C911 42 917 41 919.5 45" fill="none" stroke="#75BEFF" stroke-width="1.8"/><path d="M916.5 45.5h4.5v-4.5" fill="none" stroke="#75BEFF" stroke-width="1.7"/><circle cx="914.7" cy="51.2" r="2" fill="#D0D0D0"/><path d="M937 47v-6.5M934.3 43.3L937 40.6L939.7 43.3" fill="none" stroke="#555" stroke-width="1.7"/><circle cx="937" cy="51.2" r="2" fill="#555"/><rect x="952" y="37" width="1" height="18" fill="#3F3F46"/><g fill="none" stroke="#D0D0D0" stroke-width="1.3"><path d="M965.5 42.5C966.5 40.5 969 40.2 970 41.2"/><path d="M963.5 46C964.5 44 967 43.7 968 44.7"/><path d="M961.5 49.5C962.5 47.5 965 47.2 966 48.2"/><path d="M966 51C968 50 969.5 47 969.5 44.5M960 53L965 46.5M968.5 43L972.5 39.3"/></g><g fill="#D0D0D0"><rect x="963.5" y="39.5" width="1.2" height="1.2"/><rect x="961.5" y="43.3" width="1.2" height="1.2"/><rect x="959.5" y="47" width="1.2" height="1.2"/><rect x="972" y="44" width="1.2" height="1.2"/><rect x="970" y="48" width="1.2" height="1.2"/><rect x="968" y="52" width="1.2" height="1.2"/></g><rect x="982" y="48.6" width="6" height="1" fill="#999"/><path d="M982 52.4h6l-3 2.8z" fill="#999"/><circle cx="901.6" cy="13.6" r="3.6" fill="none" stroke="#E0E0E0" stroke-width="1.7"/><path d="M898.9 16.4L894.8 20.5" stroke="#E0E0E0" stroke-width="2.3" stroke-linecap="round"/><g fill="#505055"><rect x="109" y="81" width="1.2" height="1.2"/><rect x="109" y="85" width="1.2" height="1.2"/><rect x="111" y="83" width="1.2" height="1.2"/><rect x="113" y="81" width="1.2" height="1.2"/><rect x="113" y="85" width="1.2" height="1.2"/><rect x="115" y="83" width="1.2" height="1.2"/><rect x="117" y="81" width="1.2" height="1.2"/><rect x="117" y="85" width="1.2" height="1.2"/><rect x="119" y="83" width="1.2" height="1.2"/><rect x="121" y="81" width="1.2" height="1.2"/><rect x="121" y="85" width="1.2" height="1.2"/><rect x="123" y="83" width="1.2" height="1.2"/><rect x="125" y="81" width="1.2" height="1.2"/><rect x="125" y="85" width="1.2" height="1.2"/><rect x="127" y="83" width="1.2" height="1.2"/><rect x="129" y="81" width="1.2" height="1.2"/><rect x="129" y="85" width="1.2" height="1.2"/><rect x="131" y="83" width="1.2" height="1.2"/><rect x="133" y="81" width="1.2" height="1.2"/><rect x="133" y="85" width="1.2" height="1.2"/><rect x="135" y="83" width="1.2" height="1.2"/><rect x="137" y="81" width="1.2" height="1.2"/><rect x="137" y="85" width="1.2" height="1.2"/><rect x="139" y="83" width="1.2" height="1.2"/><rect x="141" y="81" width="1.2" height="1.2"/><rect x="141" y="85" width="1.2" height="1.2"/><rect x="143" y="83" width="1.2" height="1.2"/><rect x="145" y="81" width="1.2" height="1.2"/><rect x="145" y="85" width="1.2" height="1.2"/><rect x="147" y="83" width="1.2" height="1.2"/><rect x="149" y="81" width="1.2" height="1.2"/><rect x="149" y="85" width="1.2" height="1.2"/><rect x="151" y="83" width="1.2" height="1.2"/><rect x="153" y="81" width="1.2" height="1.2"/><rect x="153" y="85" width="1.2" height="1.2"/><rect x="155" y="83" width="1.2" height="1.2"/><rect x="157" y="81" width="1.2" height="1.2"/><rect x="157" y="85" width="1.2" height="1.2"/><rect x="159" y="83" width="1.2" height="1.2"/><rect x="161" y="81" width="1.2" height="1.2"/><rect x="161" y="85" width="1.2" height="1.2"/><rect x="163" y="83" width="1.2" height="1.2"/><rect x="165" y="81" width="1.2" height="1.2"/><rect x="165" y="85" width="1.2" height="1.2"/><rect x="167" y="83" width="1.2" height="1.2"/><rect x="169" y="81" width="1.2" height="1.2"/><rect x="169" y="85" width="1.2" height="1.2"/><rect x="171" y="83" width="1.2" height="1.2"/><rect x="173" y="81" width="1.2" height="1.2"/><rect x="173" y="85" width="1.2" height="1.2"/><rect x="175" y="83" width="1.2" height="1.2"/><rect x="177" y="81" width="1.2" height="1.2"/><rect x="177" y="85" width="1.2" height="1.2"/><rect x="179" y="83" width="1.2" height="1.2"/><rect x="181" y="81" width="1.2" height="1.2"/><rect x="181" y="85" width="1.2" height="1.2"/><rect x="183" y="83" width="1.2" height="1.2"/><rect x="185" y="81" width="1.2" height="1.2"/><rect x="185" y="85" width="1.2" height="1.2"/><rect x="187" y="83" width="1.2" height="1.2"/><rect x="189" y="81" width="1.2" height="1.2"/><rect x="189" y="85" width="1.2" height="1.2"/><rect x="191" y="83" width="1.2" height="1.2"/><rect x="193" y="81" width="1.2" height="1.2"/><rect x="193" y="85" width="1.2" height="1.2"/><rect x="195" y="83" width="1.2" height="1.2"/><rect x="197" y="81" width="1.2" height="1.2"/><rect x="197" y="85" width="1.2" height="1.2"/><rect x="199" y="83" width="1.2" height="1.2"/><rect x="201" y="81" width="1.2" height="1.2"/><rect x="201" y="85" width="1.2" height="1.2"/><rect x="203" y="83" width="1.2" height="1.2"/><rect x="205" y="81" width="1.2" height="1.2"/><rect x="205" y="85" width="1.2" height="1.2"/><rect x="207" y="83" width="1.2" height="1.2"/><rect x="209" y="81" width="1.2" height="1.2"/><rect x="209" y="85" width="1.2" height="1.2"/><rect x="211" y="83" width="1.2" height="1.2"/><rect x="213" y="81" width="1.2" height="1.2"/><rect x="213" y="85" width="1.2" height="1.2"/><rect x="215" y="83" width="1.2" height="1.2"/><rect x="217" y="81" width="1.2" height="1.2"/><rect x="217" y="85" width="1.2" height="1.2"/><rect x="219" y="83" width="1.2" height="1.2"/><rect x="221" y="81" width="1.2" height="1.2"/><rect x="221" y="85" width="1.2" height="1.2"/><rect x="223" y="83" width="1.2" height="1.2"/><rect x="225" y="81" width="1.2" height="1.2"/><rect x="225" y="85" width="1.2" height="1.2"/><rect x="227" y="83" width="1.2" height="1.2"/><rect x="229" y="81" width="1.2" height="1.2"/><rect x="229" y="85" width="1.2" height="1.2"/><rect x="231" y="83" width="1.2" height="1.2"/><rect x="233" y="81" width="1.2" height="1.2"/><rect x="233" y="85" width="1.2" height="1.2"/><rect x="235" y="83" width="1.2" height="1.2"/><rect x="237" y="81" width="1.2" height="1.2"/><rect x="237" y="85" width="1.2" height="1.2"/><rect x="239" y="83" width="1.2" height="1.2"/><rect x="241" y="81" width="1.2" height="1.2"/><rect x="241" y="85" width="1.2" height="1.2"/><rect x="243" y="83" width="1.2" height="1.2"/><rect x="245" y="81" width="1.2" height="1.2"/><rect x="245" y="85" width="1.2" height="1.2"/><rect x="247" y="83" width="1.2" height="1.2"/><rect x="249" y="81" width="1.2" height="1.2"/><rect x="249" y="85" width="1.2" height="1.2"/><rect x="251" y="83" width="1.2" height="1.2"/><rect x="253" y="81" width="1.2" height="1.2"/><rect x="253" y="85" width="1.2" height="1.2"/><rect x="255" y="83" width="1.2" height="1.2"/><rect x="257" y="81" width="1.2" height="1.2"/><rect x="257" y="85" width="1.2" height="1.2"/><rect x="259" y="83" width="1.2" height="1.2"/><rect x="261" y="81" width="1.2" height="1.2"/><rect x="261" y="85" width="1.2" height="1.2"/><rect x="263" y="83" width="1.2" height="1.2"/><rect x="265" y="81" width="1.2" height="1.2"/><rect x="265" y="85" width="1.2" height="1.2"/><rect x="267" y="83" width="1.2" height="1.2"/><rect x="269" y="81" width="1.2" height="1.2"/><rect x="269" y="85" width="1.2" height="1.2"/><rect x="271" y="83" width="1.2" height="1.2"/><rect x="273" y="81" width="1.2" height="1.2"/><rect x="273" y="85" width="1.2" height="1.2"/><rect x="275" y="83" width="1.2" height="1.2"/><rect x="277" y="81" width="1.2" height="1.2"/><rect x="277" y="85" width="1.2" height="1.2"/><rect x="279" y="83" width="1.2" height="1.2"/><rect x="281" y="81" width="1.2" height="1.2"/><rect x="281" y="85" width="1.2" height="1.2"/><rect x="283" y="83" width="1.2" height="1.2"/><rect x="285" y="81" width="1.2" height="1.2"/><rect x="285" y="85" width="1.2" height="1.2"/><rect x="287" y="83" width="1.2" height="1.2"/><rect x="289" y="81" width="1.2" height="1.2"/><rect x="289" y="85" width="1.2" height="1.2"/><rect x="291" y="83" width="1.2" height="1.2"/><rect x="293" y="81" width="1.2" height="1.2"/><rect x="293" y="85" width="1.2" height="1.2"/><rect x="295" y="83" width="1.2" height="1.2"/><rect x="297" y="81" width="1.2" height="1.2"/><rect x="297" y="85" width="1.2" height="1.2"/><rect x="299" y="83" width="1.2" height="1.2"/><rect x="301" y="81" width="1.2" height="1.2"/><rect x="301" y="85" width="1.2" height="1.2"/><rect x="303" y="83" width="1.2" height="1.2"/><rect x="305" y="81" width="1.2" height="1.2"/><rect x="305" y="85" width="1.2" height="1.2"/><rect x="307" y="83" width="1.2" height="1.2"/><rect x="309" y="81" width="1.2" height="1.2"/><rect x="309" y="85" width="1.2" height="1.2"/><rect x="311" y="83" width="1.2" height="1.2"/><rect x="313" y="81" width="1.2" height="1.2"/><rect x="313" y="85" width="1.2" height="1.2"/><rect x="315" y="83" width="1.2" height="1.2"/><rect x="317" y="81" width="1.2" height="1.2"/><rect x="317" y="85" width="1.2" height="1.2"/><rect x="319" y="83" width="1.2" height="1.2"/></g><path d="M327 81h8l-4 4z" fill="#D0D0D0"/><rect x="344.8" y="78" width="6" height="6.4" fill="#E0E0E0"/><rect x="347" y="79.3" width="2.3" height="4.7" fill="#2D2D30"/><rect x="343.8" y="84" width="8" height="1.5" fill="#E0E0E0"/><rect x="347.2" y="85.5" width="1.2" height="3.3" fill="#E0E0E0"/><path d="M359.6 79.2l9 7.6M368.6 79.2l-9 7.6" stroke="#E8E8E8" stroke-width="1.7"/><circle cx="22" cy="108" r="6" fill="#555"/><path d="M18.5 108h7M21 105.3L18.4 108L21 110.7" fill="none" stroke="#2D2D30" stroke-width="1.6"/><circle cx="44" cy="108" r="6" fill="#555"/><path d="M40.5 108h7M45 105.3L47.6 108L45 110.7" fill="none" stroke="#2D2D30" stroke-width="1.6"/><path d="M59.5 108.5L66 102L72.5 108.5M61 107V114.5H71V107" fill="none" stroke="#D0D0D0" stroke-width="1.3"/><rect x="64.5" y="109.5" width="3" height="5" fill="#D0D0D0"/><path d="M69.5 101v4" stroke="#D0D0D0" stroke-width="1"/><rect x="85.5" y="101" width="9.5" height="12" fill="#252526" stroke="#D0D0D0" stroke-width="1"/><rect x="85.5" y="101" width="9.5" height="2" fill="#D0D0D0"/><path d="M88 105.5h5M88 107.5h5M88 109.5h5" stroke="#D0D0D0" stroke-width="1"/><path d="M81 108.6L82.4 107.9L84.6 109.7L87.1 107.2L89.3 108.2V114L87.1 115L84.6 112.6L82.4 114.4L81 113.7z" fill="#8A4FD8"/><path d="M87.1 109.3L85.8 110.8L87.1 112.3zM82.3 109.8V112.5L83.6 111.2z" fill="#2D2D30"/><rect x="103" y="98" width="1" height="20" fill="#3F3F46"/><path d="M113 101h5.5l-2 2.2v2h-1.5v-2z" fill="#D0D0D0"/><circle cx="121.3" cy="110" r="4.8" fill="none" stroke="#D0D0D0" stroke-width="1.2"/><path d="M120.8 107v3.5h2.7" fill="none" stroke="#D0D0D0" stroke-width="1.1"/><path d="M133 107h6l-3 3z" fill="#999"/><path d="M147.5 106.5C148 102 155 100 158.5 104.5" fill="none" stroke="#75BEFF" stroke-width="2.2"/><path d="M155 105h5v-4.5z" fill="#75BEFF"/><path d="M158.5 109.5C158 114 151 116 147.5 111.5" fill="none" stroke="#75BEFF" stroke-width="2.2"/><path d="M151 111h-5v4.5z" fill="#75BEFF"/><rect x="170" y="105.5" width="6.5" height="7.3" fill="none" stroke="#D0D0D0" stroke-width="1"/><path d="M172 104V103.5H178.5V110.5H178M174 102V101.5H180.5V108.5H180" fill="none" stroke="#D0D0D0" stroke-width="1"/><rect x="171.5" y="108.7" width="3.5" height="1" fill="#75BEFF"/><path d="M190.5 111V101.5H197M192.5 113V103.5H199" fill="none" stroke="#D0D0D0" stroke-width="1"/><path d="M194.5 105.5h6l2.5 2.5v6.5h-8.5z" fill="none" stroke="#D0D0D0" stroke-width="1.1"/><path d="M196.5 108.5h4M196.5 110.5h4M196.5 112.5h4" stroke="#D0D0D0" stroke-width="1"/><rect x="212" y="98" width="1" height="20" fill="#3F3F46"/><path d="M225.5 103.5L221.3 107.6L225.5 111.7M228.5 103.5L232.7 107.6L228.5 111.7" fill="none" stroke="#D0D0D0" stroke-width="1.5"/><path d="M242.5 114L249.5 107" stroke="#BFBFBF" stroke-width="2.8" stroke-linecap="round"/><path d="M248 108.5A4.7 4.7 0 0 1 254.5 101.2L251.8 104L253.8 106L256.4 103.3A4.7 4.7 0 0 1 249.2 109.7z" fill="#BFBFBF"/><rect x="264" y="109" width="6" height="1.3" fill="#D0D0D0"/><rect x="270" y="106" width="8" height="4.2" fill="#D0D0D0"/><circle cx="356.3" cy="130.5" r="3.6" fill="none" stroke="#D0D0D0" stroke-width="1.5"/><path d="M353.6 133.2L349.5 137.3" stroke="#D0D0D0" stroke-width="2.2" stroke-linecap="round"/><path d="M366 131h6l-3 3z" fill="#D0D0D0"/><path d="M362 156h9l-4.5-4.5z" fill="#999"/><path d="M362 1359h9l-4.5 4.5z" fill="#999"/><path d="M463 83.5h3.5M466.6 80v7" fill="none" stroke="#E8F0F8" stroke-width="1.1"/><path d="M466.6 81.7h4v3.6h-4" fill="none" stroke="#E8F0F8" stroke-width="1.1"/><rect x="466.6" y="84.8" width="4.5" height="1.2" fill="#E8F0F8"/><path d="M481.6 79.2l8.8 7.6M490.4 79.2l-8.8 7.6" stroke="#E8F0F8" stroke-width="1.3"/><rect x="387.5" y="97.5" width="13" height="11" fill="#1E1E1E" stroke="#C27BC4" stroke-width="1"/><path d="M391 98h2v2h2v2h-2v2h-2v-2h-2v-2h2z" fill="#D8D8D8"/><path d="M395 102h2v2h2v2h-2v2h-2v-2h-2v-2h2z" fill="#D8D8D8"/><path d="M1088 103h7l-3.5 3.5z" fill="#999"/><path d="M1108.5 96.3L1112.1 99.9L1108.5 103.5L1104.9 99.9z" fill="#F0C88A"/><path d="M1116.4 99.9L1119 102.5L1116.4 105.1L1113.8 102.5zM1116 105.1L1118.6 107.7L1116 110.3L1113.4 107.7z" fill="#F0C88A"/><path d="M1110.5 102.5V106.5H1113.5" fill="none" stroke="#F0C88A" stroke-width="1"/><path d="M433.5 1361h6l-3 3z" fill="#D0D0D0"/><circle cx="472.8" cy="1362.8" r="5.8" fill="#E0E0E0"/><circle cx="472.8" cy="1362.8" r="4.8" fill="#2C9A3C"/><path d="M470.2 1362.8L472 1364.6L475.5 1361" fill="none" stroke="#FFFFFF" stroke-width="1.5"/><path d="M652.5 1360l-2.7 2.7l2.7 2.7" fill="none" stroke="#D0D0D0" stroke-width="1.2"/><rect x="710.5" y="1357" width="1" height="12" fill="#D0D0D0"/><path d="M830 1358.5v8l-5-4z" fill="#5A5A5A"/><path d="M6.5 1384.5h13l-2.6 9.5h-13z" fill="none" stroke="#FFFFFF" stroke-width="1.2"/></svg></body></html>
